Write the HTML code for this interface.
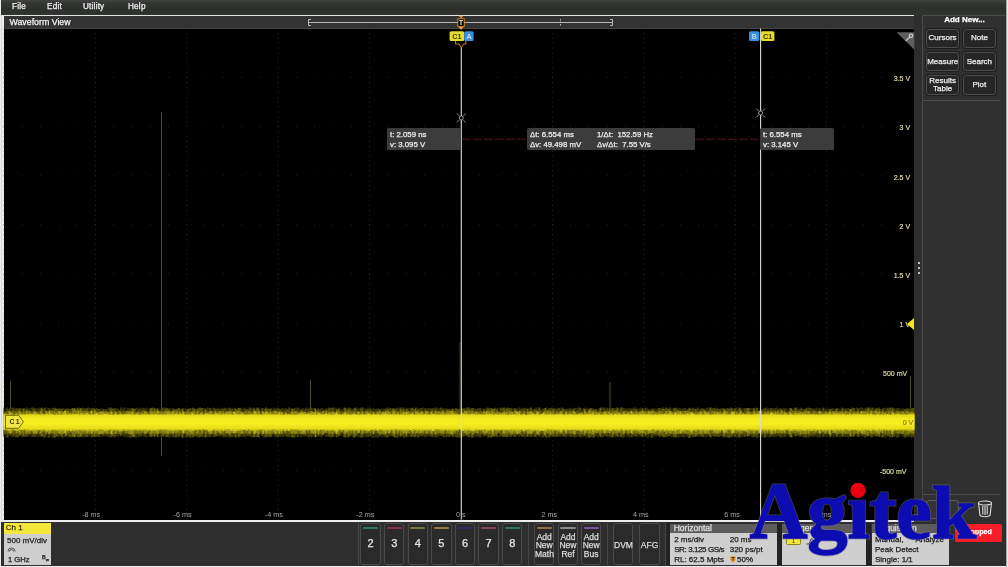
<!DOCTYPE html>
<html lang="en"><head><meta charset="utf-8"><title>Waveform View</title>
<style>
html,body{margin:0;padding:0;background:#000}
body{width:1008px;height:567px;position:relative;overflow:hidden;font-family:"Liberation Sans",sans-serif;color:#e6e6e6;font-size:8px;-webkit-text-stroke-width:.25px}
.a{position:absolute}
.t{position:absolute;white-space:nowrap;line-height:1}
#menubar{left:1px;top:0;width:1005px;height:15px;background:linear-gradient(#414340 0,#343633 22%,#2d2f2d 60%,#323432 100%)}
#menubar span{position:absolute;top:2px;font-size:8.2px;color:#f0f0f0;line-height:10px;letter-spacing:.2px}
#titlebar{left:3.5px;top:16px;width:910.7px;height:12.6px;background:#323332;border-bottom:1px solid #444;box-sizing:border-box}
#plot{left:3.5px;top:28.5px;width:910.7px;height:491.1px;background:#000}
.btn{position:absolute;box-sizing:border-box;border:1px solid #4a4a4a;border-radius:3px;background:#2a2a2a;color:#e8e8e8;text-align:center}
.rb{position:absolute;box-sizing:border-box;border:1px solid #4c4c4c;border-radius:3px;background:#262626;color:#eee;text-align:center;font-size:8px;line-height:8px;box-shadow:0 0 0 1px #1e1e1e}
.panel{position:absolute;top:524px;height:40.5px;background:#cfcfcf;color:#1a1a1a}
.panel .h{position:absolute;left:0;top:0;right:0;height:9px;background:#5c5c5c;color:#e0e0e0;font-size:8.5px;line-height:9px;padding-left:4px}
.panel .l{position:absolute;font-size:8px;line-height:10px;white-space:nowrap}
.ro{position:absolute;top:128.3px;height:21.6px;background:#3c3c3c;border-radius:1.5px;color:#ececec;font-size:7.8px}
.ro span{position:absolute;white-space:nowrap;line-height:9px}
#wrap{position:absolute;left:0;top:0;width:1008px;height:567px;will-change:transform}
</style></head><body><div id="wrap">

<div id="menubar" class="a"><span style="left:11px">File</span><span style="left:46px">Edit</span><span style="left:82px">Utility</span><span style="left:127px">Help</span></div>
<div class="a" style="left:0;top:0;width:1px;height:567px;background:#ececec"></div>
<div class="a" style="left:1px;top:15px;width:1px;height:506px;background:#d8d8d8"></div>
<div class="a" style="left:2px;top:15px;width:1.5px;height:506px;background:#ededed"></div>
<div class="a" style="left:2px;top:14.7px;width:912.4px;height:1.5px;background:#e4e4e4"></div>
<div id="titlebar" class="a"><span class="t" style="left:6px;top:2px;font-size:8.8px;color:#f2f2f2">Waveform View</span></div>
<div id="plot" class="a"></div>
<div class="a" style="left:0;top:519.8px;width:914.4px;height:2.3px;background:#ededed"></div>
<div class="a" style="left:1px;top:522px;width:1005px;height:43.5px;background:#2f2e2f"></div>
<div class="a" style="left:0;top:565.7px;width:1008px;height:1.3px;background:#f0f0f0"></div>
<div class="a" style="left:914.2px;top:14.5px;width:92.3px;height:507.5px;background:#2d2d2d"></div>
<div class="a" style="left:922px;top:14.5px;width:84px;height:507.5px;background:#303030;border-left:1px solid #4a4a4a;border-top:1px solid #4a4a4a;box-sizing:border-box"></div>
<div class="a" style="left:1006px;top:0;width:1px;height:567px;background:#a8a8a8"></div>
<div class="a" style="left:1007px;top:0;width:1px;height:567px;background:#e8e8e8"></div>
<div class="a" style="left:918px;top:261.5px;width:2px;height:2px;background:#cacaca;border-radius:.5px"></div>
<div class="a" style="left:918px;top:266.5px;width:2px;height:2px;background:#cacaca;border-radius:.5px"></div>
<div class="a" style="left:918px;top:271.5px;width:2px;height:2px;background:#cacaca;border-radius:.5px"></div>
<div class="t" style="left:923px;width:83px;top:14.6px;text-align:center;font-weight:bold;font-size:8px;color:#fff;line-height:9px">Add New...</div>
<div class="rb" style="left:926.2px;top:28.8px;width:32.8px;height:18.9px;padding-top:4.6px">Cursors</div>
<div class="rb" style="left:963px;top:28.8px;width:32.8px;height:18.9px;padding-top:4.6px">Note</div>
<div class="rb" style="left:926.2px;top:52px;width:32.8px;height:19.2px;padding-top:4.8px">Measure</div>
<div class="rb" style="left:963px;top:52px;width:32.8px;height:19.2px;padding-top:4.8px">Search</div>
<div class="rb" style="left:926.2px;top:75.2px;width:32.8px;height:19.5px;padding-top:1px">Results<br>Table</div>
<div class="rb" style="left:963px;top:75.2px;width:32.8px;height:19.5px;padding-top:5px">Plot</div>
<div class="a" style="left:923px;top:100px;width:77px;height:1px;background:#4e4e4e"></div>
<div class="a" style="left:923px;top:494px;width:77px;height:1px;background:#4e4e4e"></div>
<div class="a" style="left:926px;top:499.5px;width:33px;height:19px;border:1px solid #5c5c5c;border-radius:3px;box-sizing:border-box;background:#343434"></div>
<svg class="a" style="left:0;top:0" width="1008" height="567" viewBox="0 0 1008 567" font-family="Liberation Sans, sans-serif">
<clipPath id="pc"><rect x="3.5" y="28.5" width="910.7" height="491.1"/></clipPath><g clip-path="url(#pc)" stroke="#262626" stroke-width="1" fill="none"><path d="M4.0 28.0V520.6M95.4 28.0V520.6M186.8 28.0V520.6M278.2 28.0V520.6M369.6 28.0V520.6M461.0 28.0V520.6M552.4 28.0V520.6M643.8 28.0V520.6M735.2 28.0V520.6M826.6 28.0V520.6M918.0 28.0V520.6" stroke-dasharray="1 3.910"/><path d="M3.50 77.6H915.2M3.50 126.7H915.2M3.50 175.8H915.2M3.50 224.9H915.2M3.50 274.0H915.2M3.50 323.1H915.2M3.50 372.2H915.2M3.50 421.3H915.2M3.50 470.4H915.2" stroke-dasharray="1 17.280"/></g>
<g stroke="#504c22" stroke-width="1" fill="none">
<path d="M161.5 112V456"/>
<path d="M10.5 381V410M310.5 380V410M610 382V410M910.5 376V410"/>
</g>
<path d="M460 342V410" stroke="#3c3a14" stroke-width="1"/>
<path d="M5.0 408.4V437.1M6.0 408.3V437.7M11.0 408.9V437.3M15.0 407.5V437.4M30.0 408.2V437.5M47.0 407.4V437.5M64.0 407.9V437.3M102.0 407.8V437.7M119.0 408.6V437.0M120.0 409.1V436.7M122.0 409.0V437.0M126.0 407.8V437.2M129.0 407.9V437.8M148.0 407.4V437.3M159.0 407.6V437.2M172.0 407.9V436.6M184.0 408.3V437.0M212.0 407.9V436.1M217.0 407.5V436.5M219.0 408.1V436.1M237.0 408.0V437.0M256.0 408.3V437.1M260.0 407.5V436.1M273.0 407.8V436.4M300.0 407.6V437.1M310.0 408.4V436.6M317.0 409.1V437.1M324.0 408.4V436.4M325.0 408.9V437.6M335.0 408.7V436.4M342.0 408.0V436.4M359.0 407.5V437.5M374.0 408.8V437.8M380.0 408.9V436.5M383.0 408.0V436.5M410.0 407.9V437.3M424.0 408.8V436.5M482.0 408.7V437.3M486.0 408.9V436.2M499.0 408.2V437.5M518.0 408.7V436.2M520.0 407.7V436.1M532.0 407.6V436.3M534.0 408.1V436.7M538.0 408.6V437.6M542.0 408.8V436.5M582.0 409.2V436.2M595.0 407.9V437.2M597.0 408.8V436.5M625.0 408.9V436.9M633.0 408.7V437.1M640.0 408.3V437.0M644.0 409.0V436.1M650.0 408.5V436.8M686.0 408.0V436.2M699.0 408.8V436.7M744.0 409.0V436.8M759.0 408.6V437.2M786.0 407.5V437.5M788.0 408.0V436.7M793.0 408.9V436.7M794.0 407.8V437.6M821.0 409.2V436.4M825.0 409.1V436.6M828.0 408.8V436.3M835.0 408.4V436.7M839.0 408.6V437.5M841.0 408.2V437.5M856.0 407.7V436.6M881.0 408.5V437.6M896.0 408.0V437.4M900.0 408.4V437.2M901.0 408.2V436.0M902.0 407.7V436.6" stroke="#1c1a02" stroke-width="1.05" fill="none"/>
<path d="M4.0 407.7V436.6M9.0 408.5V436.1M12.0 407.6V437.2M21.0 408.2V436.4M22.0 408.3V437.7M29.0 408.1V436.6M31.0 407.5V436.4M32.0 407.8V437.1M37.0 407.7V437.4M38.0 408.3V436.7M39.0 407.4V437.0M46.0 407.7V437.2M48.0 408.1V437.8M50.0 408.0V437.1M51.0 408.9V436.0M53.0 408.0V437.3M58.0 408.1V437.5M60.0 407.8V436.3M68.0 407.8V436.7M76.0 407.7V436.2M83.0 407.8V436.7M84.0 408.2V437.6M89.0 407.4V436.4M90.0 408.3V436.5M101.0 407.6V437.0M104.0 408.7V436.6M105.0 409.0V436.1M106.0 409.1V437.1M108.0 408.2V436.9M114.0 407.9V437.7M117.0 407.7V436.1M124.0 407.6V436.9M125.0 407.6V437.5M127.0 408.8V437.3M137.0 407.5V436.5M138.0 407.7V437.6M140.0 407.8V437.3M142.0 409.1V436.0M144.0 408.0V437.8M146.0 408.3V437.8M147.0 407.6V437.1M149.0 408.5V436.8M160.0 408.9V436.8M165.0 407.5V437.3M170.0 407.9V436.5M171.0 408.4V437.8M175.0 409.0V437.4M180.0 408.3V436.1M181.0 408.9V436.9M185.0 407.7V437.2M186.0 408.9V437.8M189.0 408.1V437.1M192.0 408.9V437.3M203.0 408.4V437.1M204.0 407.7V437.4M207.0 407.7V437.6M209.0 408.4V436.2M213.0 408.3V436.7M215.0 408.1V437.0M221.0 407.6V437.5M227.0 408.5V436.5M228.0 407.5V436.9M233.0 409.1V436.5M234.0 407.4V436.9M241.0 407.8V436.4M242.0 409.1V436.9M243.0 407.8V437.0M246.0 407.5V437.7M249.0 407.7V436.1M252.0 407.4V437.3M261.0 408.7V436.2M264.0 407.9V437.8M272.0 408.1V436.4M274.0 407.5V437.7M277.0 407.6V436.9M281.0 408.9V437.3M283.0 407.8V437.4M284.0 409.0V436.8M285.0 408.1V436.0M290.0 407.7V436.0M296.0 408.5V436.6M297.0 407.4V437.2M299.0 408.8V436.8M302.0 408.7V437.1M303.0 408.0V436.1M304.0 408.4V437.2M307.0 407.4V436.2M313.0 408.3V436.1M314.0 408.3V436.4M319.0 408.8V437.4M321.0 407.8V437.1M323.0 408.7V436.2M327.0 408.2V436.8M341.0 408.8V436.1M343.0 409.0V437.3M347.0 407.7V436.1M352.0 409.2V436.7M357.0 408.6V436.0M364.0 408.5V436.7M365.0 408.5V436.9M366.0 409.1V437.4M367.0 407.6V436.7M369.0 407.4V436.6M372.0 409.0V437.7M376.0 408.5V436.9M378.0 407.9V437.7M382.0 407.6V437.4M385.0 408.4V437.0M389.0 408.7V436.1M391.0 407.8V436.2M396.0 408.5V437.7M398.0 409.1V437.2M399.0 407.5V437.7M405.0 407.6V437.7M408.0 407.6V436.4M409.0 408.0V437.0M417.0 407.4V437.4M420.0 408.3V437.2M422.0 407.8V436.5M427.0 409.0V437.8M428.0 407.9V436.2M430.0 408.2V436.8M434.0 408.2V436.4M437.0 408.7V436.3M438.0 407.7V437.4M439.0 408.3V437.5M440.0 407.7V436.0M442.0 408.1V436.0M444.0 408.5V437.6M445.0 408.1V437.7M448.0 408.5V437.1M451.0 408.7V436.2M454.0 408.5V437.6M466.0 408.6V437.1M471.0 407.8V436.5M474.0 408.8V436.3M476.0 409.1V437.2M479.0 408.9V437.2M481.0 408.2V437.5M483.0 407.9V436.9M490.0 407.7V437.4M498.0 407.7V436.9M513.0 408.9V437.1M516.0 408.0V437.3M526.0 407.5V436.4M529.0 407.9V437.0M530.0 408.2V436.6M537.0 407.7V437.8M540.0 407.4V436.5M541.0 408.7V437.5M548.0 408.7V437.5M555.0 407.5V436.0M561.0 407.4V437.3M565.0 408.9V436.3M567.0 408.4V436.4M568.0 408.8V436.1M569.0 408.5V436.6M572.0 408.9V436.4M573.0 408.4V436.2M576.0 408.7V437.1M578.0 407.5V436.0M586.0 407.5V437.4M587.0 407.6V437.7M599.0 408.8V436.1M602.0 407.6V436.9M603.0 407.8V437.5M605.0 407.5V436.1M606.0 409.1V436.2M608.0 409.1V436.3M611.0 407.8V437.7M614.0 407.9V436.3M616.0 409.0V437.6M619.0 407.9V437.4M623.0 409.2V437.8M626.0 408.2V436.2M627.0 408.4V437.6M628.0 408.8V436.5M629.0 407.5V437.6M631.0 408.5V436.5M638.0 408.9V437.1M639.0 408.1V436.7M647.0 407.7V437.6M648.0 408.9V437.7M649.0 408.7V437.4M653.0 408.3V436.9M654.0 407.6V437.1M655.0 408.5V436.3M656.0 408.4V436.5M657.0 408.9V436.1M671.0 408.6V437.3M673.0 408.3V437.0M678.0 407.6V437.3M680.0 408.4V436.3M682.0 408.7V437.0M684.0 407.8V437.4M687.0 408.4V436.9M688.0 409.2V437.3M692.0 407.8V436.1M705.0 408.8V436.3M707.0 407.7V436.8M709.0 408.9V436.3M722.0 408.0V436.0M726.0 407.9V436.9M733.0 408.3V436.8M734.0 408.6V436.8M736.0 407.7V436.4M737.0 407.6V437.5M742.0 409.0V436.8M746.0 407.5V436.1M750.0 408.1V436.5M751.0 408.0V436.2M753.0 408.0V437.5M755.0 408.4V437.1M758.0 407.9V437.4M760.0 408.7V437.6M761.0 408.9V437.6M763.0 408.0V436.5M767.0 409.0V436.7M769.0 409.0V437.6M773.0 407.7V436.3M774.0 408.6V437.6M776.0 407.5V437.2M777.0 407.6V436.5M778.0 408.1V436.2M780.0 407.9V437.7M783.0 408.9V437.2M787.0 407.9V437.1M789.0 408.9V436.8M798.0 407.6V436.1M803.0 408.8V437.7M808.0 407.6V436.5M812.0 408.4V437.2M814.0 408.6V436.7M816.0 407.9V437.2M817.0 407.5V437.3M818.0 408.7V437.0M819.0 408.0V437.0M822.0 408.7V436.0M827.0 407.8V437.6M829.0 407.7V436.7M832.0 407.7V436.3M833.0 408.1V436.8M838.0 407.9V436.8M844.0 408.6V436.9M847.0 407.9V437.0M849.0 408.0V437.0M855.0 408.0V436.2M860.0 407.7V436.2M862.0 407.6V436.8M863.0 408.3V436.8M864.0 408.4V437.6M874.0 407.9V436.5M884.0 408.2V436.3M886.0 408.8V437.5M891.0 408.3V436.2M898.0 408.0V437.0M903.0 407.9V436.9M904.0 408.4V436.8M910.0 408.8V436.5" stroke="#343106" stroke-width="1.05" fill="none"/>
<path d="M7.0 407.5V437.6M8.0 408.9V437.6M10.0 408.1V436.0M14.0 408.1V436.8M17.0 408.2V437.3M19.0 408.3V436.2M25.0 408.4V437.0M27.0 407.5V436.5M28.0 409.2V436.3M34.0 409.0V436.3M36.0 409.0V436.1M40.0 408.4V436.1M44.0 408.1V437.6M45.0 407.5V437.7M52.0 408.3V437.6M56.0 407.4V436.8M63.0 408.0V437.7M67.0 407.8V437.4M70.0 408.8V437.6M71.0 409.0V436.4M79.0 407.6V437.8M86.0 409.0V437.0M88.0 407.4V437.0M91.0 408.0V436.9M92.0 408.8V437.6M93.0 407.8V437.3M96.0 408.3V436.9M98.0 409.1V436.5M100.0 409.1V436.3M107.0 409.2V436.3M109.0 407.8V437.2M111.0 407.4V437.2M112.0 408.3V437.7M116.0 409.0V436.3M118.0 408.7V437.6M123.0 408.4V436.1M128.0 407.7V437.2M131.0 409.1V437.6M136.0 408.0V437.7M141.0 407.7V437.0M143.0 407.8V436.1M145.0 408.3V436.9M153.0 407.5V436.3M156.0 408.9V436.4M161.0 408.5V436.6M162.0 407.4V436.4M164.0 407.5V436.5M168.0 408.6V436.4M169.0 408.6V437.7M174.0 408.2V437.0M177.0 408.9V436.1M178.0 407.9V437.4M191.0 407.9V437.7M194.0 407.7V437.1M196.0 409.0V436.1M197.0 408.7V437.7M199.0 407.9V437.7M201.0 407.9V436.5M208.0 407.6V437.4M211.0 408.1V437.2M222.0 408.6V436.1M224.0 408.4V437.7M226.0 407.9V437.6M229.0 408.1V437.4M230.0 407.4V437.3M231.0 409.1V436.6M244.0 409.1V437.5M245.0 407.8V436.0M247.0 409.0V436.2M251.0 408.1V437.2M253.0 409.1V437.6M262.0 407.9V436.1M263.0 407.9V436.5M267.0 409.1V436.1M268.0 407.9V437.0M269.0 409.1V437.5M275.0 408.0V436.0M279.0 408.5V436.6M282.0 408.1V436.5M286.0 407.8V436.3M287.0 409.2V437.6M288.0 408.9V436.3M291.0 409.1V437.1M294.0 408.5V437.4M295.0 407.7V437.4M301.0 408.6V437.6M305.0 409.0V436.0M306.0 407.8V436.5M308.0 408.9V437.1M312.0 408.3V437.5M320.0 408.9V436.3M322.0 408.1V437.6M326.0 408.4V436.7M328.0 408.6V437.0M329.0 407.4V436.7M330.0 407.8V436.4M332.0 407.6V437.6M333.0 407.6V437.0M334.0 407.5V436.7M336.0 407.5V436.9M337.0 409.1V437.6M340.0 409.1V436.2M346.0 408.0V437.7M350.0 408.0V436.2M351.0 408.4V436.2M353.0 408.8V437.3M358.0 408.6V437.2M360.0 408.2V436.9M362.0 407.4V437.8M363.0 407.6V437.2M370.0 408.0V436.6M371.0 409.1V436.5M373.0 408.1V437.4M375.0 409.1V437.5M377.0 408.9V437.5M381.0 408.7V437.0M387.0 409.1V437.4M392.0 408.6V436.6M402.0 408.9V436.3M413.0 407.5V437.1M414.0 408.8V437.2M419.0 408.3V436.4M423.0 407.6V436.7M426.0 408.1V436.2M429.0 408.1V436.2M432.0 408.0V437.5M435.0 407.6V437.0M446.0 408.8V436.6M447.0 408.5V437.0M450.0 408.7V437.0M455.0 408.8V436.5M456.0 407.9V437.0M457.0 408.5V437.1M459.0 408.8V437.1M460.0 409.2V437.7M461.0 407.7V436.4M463.0 408.4V436.5M464.0 408.6V436.3M465.0 408.1V436.1M468.0 407.5V437.3M469.0 407.4V437.0M470.0 408.7V437.2M475.0 408.2V436.8M477.0 408.9V436.3M478.0 407.9V436.8M484.0 408.5V436.6M485.0 409.1V436.3M488.0 407.4V437.8M496.0 408.7V437.0M500.0 408.3V436.8M502.0 408.4V436.6M505.0 407.5V436.7M509.0 408.0V436.2M510.0 408.3V436.9M512.0 408.4V436.3M514.0 407.9V436.9M517.0 408.5V436.4M519.0 407.5V437.3M521.0 408.6V436.4M523.0 408.7V436.7M525.0 408.8V437.6M533.0 409.1V437.0M536.0 407.6V436.6M544.0 408.7V437.0M547.0 408.9V437.7M550.0 408.4V437.0M552.0 408.6V436.7M553.0 408.1V436.4M557.0 409.2V436.3M558.0 408.0V437.0M560.0 409.0V436.3M562.0 408.5V436.3M570.0 407.8V437.3M575.0 407.7V437.5M577.0 408.1V436.9M579.0 407.6V436.7M581.0 408.3V437.8M583.0 408.4V437.3M588.0 409.0V437.0M590.0 408.1V437.6M592.0 409.1V436.6M593.0 408.2V437.5M598.0 409.2V437.7M609.0 408.2V437.2M615.0 407.7V436.9M620.0 409.2V436.0M630.0 408.3V437.3M635.0 408.9V436.2M636.0 407.4V436.2M637.0 409.0V437.3M641.0 407.6V436.5M645.0 408.3V436.8M646.0 407.4V436.1M651.0 408.7V437.6M658.0 408.2V436.3M659.0 408.1V436.1M661.0 408.2V436.0M665.0 408.5V437.1M666.0 407.5V437.0M667.0 407.4V437.5M669.0 408.9V436.2M672.0 409.1V436.7M675.0 407.6V436.7M677.0 408.4V437.5M679.0 407.9V437.4M681.0 408.4V436.6M683.0 408.5V437.0M685.0 408.1V436.7M691.0 408.2V436.5M694.0 408.6V436.7M697.0 408.8V436.5M700.0 409.1V436.8M701.0 408.8V436.2M702.0 408.1V437.0M703.0 408.7V437.3M704.0 408.4V437.1M706.0 408.2V437.5M708.0 407.6V436.1M712.0 408.3V436.1M714.0 408.3V436.6M715.0 408.0V436.7M716.0 409.1V436.6M717.0 407.6V437.1M718.0 408.4V436.8M720.0 408.5V436.0M721.0 408.4V436.3M727.0 407.7V437.5M728.0 408.5V437.2M730.0 408.8V437.2M738.0 408.9V436.7M741.0 407.7V437.3M743.0 408.2V437.1M752.0 408.8V437.4M756.0 407.5V437.6M762.0 408.9V436.4M764.0 409.1V437.4M766.0 407.6V436.5M768.0 407.8V436.7M770.0 408.4V437.3M772.0 408.0V437.1M775.0 408.1V436.9M782.0 408.6V436.5M784.0 407.7V437.6M797.0 408.7V436.3M799.0 409.1V436.6M801.0 407.5V436.5M802.0 408.3V436.1M805.0 409.1V436.7M806.0 407.8V437.7M807.0 408.1V437.4M810.0 408.2V436.1M811.0 407.9V436.2M815.0 408.8V436.3M820.0 407.7V437.7M823.0 407.6V436.9M824.0 407.7V436.8M826.0 409.1V436.6M834.0 408.9V437.4M840.0 409.1V437.6M845.0 408.0V437.0M846.0 408.9V436.2M848.0 408.0V437.4M853.0 407.9V436.8M857.0 407.6V436.6M858.0 408.4V437.1M859.0 408.4V437.1M861.0 407.6V436.2M865.0 408.5V437.7M866.0 407.5V437.0M870.0 407.7V436.1M871.0 408.8V437.6M873.0 407.4V436.7M875.0 409.0V436.7M878.0 408.8V436.6M882.0 408.8V437.6M885.0 407.6V437.8M887.0 407.9V436.6M888.0 407.7V436.2M889.0 408.6V436.3M894.0 407.7V436.3M895.0 409.0V436.7M899.0 408.1V437.2M906.0 408.8V436.2M908.0 407.9V436.4M911.0 408.5V437.2M912.0 408.1V437.7M913.0 408.0V436.0M914.0 408.1V437.4" stroke="#4e4a08" stroke-width="1.05" fill="none"/>
<path d="M13.0 407.7V436.8M16.0 408.2V437.2M18.0 408.7V437.4M20.0 407.9V436.0M23.0 408.8V436.8M24.0 408.0V436.5M26.0 409.1V436.9M33.0 407.5V437.0M35.0 407.9V437.1M41.0 408.3V436.7M42.0 407.5V436.2M43.0 409.0V436.4M49.0 408.5V437.5M54.0 407.7V437.8M59.0 408.4V436.4M62.0 408.7V437.4M65.0 409.1V437.0M69.0 408.9V436.9M72.0 408.3V437.5M73.0 408.0V436.4M77.0 407.7V436.3M82.0 407.8V437.3M85.0 408.0V437.0M94.0 408.3V436.8M95.0 409.0V437.0M97.0 408.2V436.8M99.0 409.1V437.3M103.0 408.8V436.2M110.0 407.4V436.8M115.0 407.9V437.6M121.0 407.6V436.3M130.0 408.4V437.5M132.0 408.2V436.9M133.0 408.1V436.9M134.0 409.2V437.2M135.0 408.7V436.7M139.0 409.0V436.6M150.0 408.6V436.5M151.0 408.1V437.2M154.0 408.5V436.5M155.0 407.7V436.9M157.0 408.5V436.2M158.0 408.6V437.4M163.0 408.3V436.8M166.0 407.8V436.5M173.0 408.6V437.3M182.0 408.7V437.4M183.0 408.3V437.8M187.0 408.9V437.6M198.0 408.2V436.4M205.0 408.3V437.4M206.0 409.2V437.0M210.0 408.1V437.1M214.0 407.8V437.3M218.0 408.3V436.7M220.0 408.9V436.0M223.0 408.6V436.4M225.0 407.8V436.1M232.0 408.3V437.4M235.0 408.2V437.3M236.0 409.1V437.4M238.0 407.8V436.4M239.0 408.3V437.4M248.0 409.2V436.1M250.0 407.5V436.6M255.0 408.9V437.0M258.0 407.5V437.1M259.0 408.8V437.7M265.0 409.0V436.7M270.0 408.7V436.3M271.0 408.5V437.2M276.0 409.2V437.3M278.0 408.2V437.4M280.0 408.9V436.6M289.0 407.5V437.3M292.0 408.2V437.3M293.0 409.1V437.6M298.0 407.7V437.2M309.0 408.2V437.5M311.0 407.6V436.7M318.0 408.5V436.3M331.0 408.2V437.5M338.0 409.2V436.5M339.0 407.7V436.0M344.0 407.7V436.9M348.0 409.0V437.5M349.0 407.6V436.8M355.0 408.2V437.5M356.0 407.5V436.3M361.0 407.6V437.4M368.0 408.8V437.1M379.0 408.8V436.5M384.0 408.9V436.5M386.0 408.3V437.3M388.0 407.4V437.3M390.0 408.0V436.2M394.0 408.9V437.0M395.0 408.4V437.2M397.0 407.7V437.8M400.0 408.5V436.5M401.0 407.5V436.7M403.0 407.5V436.2M404.0 409.1V437.6M406.0 408.9V436.7M407.0 408.5V437.3M411.0 408.1V437.2M415.0 408.4V437.4M416.0 407.6V436.3M418.0 409.2V437.8M421.0 407.9V436.1M425.0 408.5V437.2M431.0 408.8V436.6M433.0 408.6V436.5M436.0 407.8V437.5M441.0 407.6V436.1M443.0 408.7V437.0M449.0 409.0V437.0M452.0 408.7V436.3M453.0 408.6V437.0M458.0 409.1V437.5M467.0 407.6V436.0M473.0 408.1V437.4M480.0 407.9V437.1M487.0 407.7V436.3M491.0 408.0V437.5M492.0 408.8V437.5M493.0 408.5V436.4M494.0 409.0V436.4M495.0 407.8V436.6M497.0 408.4V437.3M501.0 407.4V436.3M503.0 408.1V437.0M506.0 409.1V437.2M508.0 407.5V436.5M511.0 407.8V437.0M522.0 408.5V436.7M524.0 407.8V436.6M527.0 408.6V437.1M528.0 408.8V436.8M543.0 408.7V437.6M546.0 407.4V437.8M549.0 408.3V437.7M551.0 407.7V436.4M556.0 408.9V437.2M559.0 408.1V436.6M563.0 407.5V436.3M564.0 409.0V436.8M566.0 409.0V437.2M571.0 408.8V437.0M574.0 408.3V436.9M580.0 407.7V436.7M584.0 408.2V436.1M585.0 408.9V436.1M596.0 409.0V436.3M600.0 407.9V436.7M601.0 407.6V437.2M604.0 407.4V436.5M607.0 407.7V437.0M610.0 408.3V436.7M612.0 408.4V437.5M613.0 407.9V437.1M618.0 407.8V436.9M622.0 407.5V436.5M624.0 408.0V437.5M632.0 408.4V437.4M634.0 407.5V436.3M642.0 409.0V437.2M643.0 408.1V436.4M652.0 408.7V437.7M660.0 408.0V437.4M662.0 409.0V436.3M663.0 407.5V436.9M670.0 407.5V436.6M689.0 407.7V437.7M690.0 408.2V437.7M693.0 407.7V437.2M695.0 408.9V436.9M696.0 408.7V436.4M698.0 407.6V436.2M711.0 407.4V437.7M713.0 408.4V436.0M719.0 409.1V436.9M723.0 408.3V437.6M724.0 408.6V436.3M731.0 407.4V437.3M732.0 408.5V436.6M739.0 407.5V437.8M740.0 408.0V436.5M747.0 408.0V436.2M748.0 407.9V436.7M757.0 408.0V437.4M771.0 408.1V436.6M779.0 409.0V436.2M781.0 408.6V437.2M785.0 408.7V436.5M790.0 407.9V437.0M791.0 408.0V437.8M792.0 408.8V437.3M795.0 407.8V436.2M796.0 407.6V436.5M800.0 408.9V436.7M804.0 408.9V437.3M809.0 407.8V437.4M813.0 408.4V436.4M830.0 409.1V437.5M831.0 408.9V436.5M836.0 408.7V436.2M842.0 407.4V436.3M843.0 408.8V437.0M852.0 407.5V436.6M867.0 408.4V436.5M868.0 407.6V436.0M869.0 407.6V436.3M872.0 407.5V437.4M876.0 408.4V436.1M877.0 407.7V436.5M879.0 407.6V437.1M880.0 409.1V436.5M892.0 407.5V437.5M893.0 408.6V437.1M897.0 408.5V437.7M907.0 408.5V436.7M909.0 409.1V436.6" stroke="#6a640c" stroke-width="1.05" fill="none"/>
<path d="M55.0 408.4V437.5M57.0 409.0V436.5M61.0 408.9V436.3M66.0 409.2V436.1M74.0 408.1V437.1M75.0 408.7V437.5M78.0 408.6V437.2M80.0 408.6V436.9M81.0 408.2V436.2M87.0 408.3V436.8M113.0 408.8V436.1M152.0 407.7V436.5M167.0 408.3V437.1M176.0 409.1V437.8M179.0 407.8V436.8M188.0 408.7V436.2M190.0 408.5V437.2M193.0 407.8V437.3M195.0 409.0V436.3M200.0 407.6V437.0M202.0 407.9V436.6M216.0 408.9V436.2M240.0 408.0V436.3M254.0 407.8V437.2M257.0 407.7V437.1M266.0 407.4V437.4M315.0 407.8V437.6M316.0 409.2V436.9M345.0 407.8V437.3M354.0 408.4V437.2M393.0 408.2V436.3M412.0 408.3V436.3M462.0 408.3V437.6M472.0 408.3V437.4M489.0 408.6V437.3M504.0 407.5V436.7M507.0 408.3V436.9M515.0 408.6V436.4M531.0 407.5V436.8M535.0 409.2V436.9M539.0 407.6V436.2M545.0 407.9V436.1M554.0 408.8V436.8M589.0 409.0V437.7M591.0 407.9V436.8M594.0 409.2V437.4M617.0 407.5V436.2M621.0 407.6V437.3M664.0 409.1V437.4M668.0 408.8V436.1M674.0 407.9V437.3M676.0 408.3V437.3M710.0 407.8V437.0M725.0 409.0V437.0M729.0 408.5V437.7M735.0 408.4V437.1M745.0 408.2V436.7M749.0 408.3V436.1M754.0 407.9V436.8M765.0 408.3V437.4M837.0 408.3V436.9M850.0 409.0V436.2M851.0 409.1V436.7M854.0 408.3V436.6M883.0 408.6V437.3M890.0 407.4V437.2M905.0 409.2V437.7" stroke="#857e12" stroke-width="1.05" fill="none"/>
<path d="M5.0 412.0V433.8M7.0 410.5V434.1M13.0 411.3V433.0M15.0 410.9V433.3M18.0 411.7V432.9M21.0 411.4V433.0M25.0 411.1V434.5M28.0 412.1V433.6M31.0 410.7V433.2M32.0 411.9V433.8M39.0 410.4V433.7M42.0 410.5V434.4M43.0 411.3V433.6M44.0 412.1V433.9M45.0 410.7V433.3M51.0 411.6V433.9M67.0 412.2V434.6M69.0 410.7V433.4M70.0 411.0V432.9M72.0 410.8V433.2M75.0 412.2V434.0M77.0 411.2V434.3M94.0 411.9V433.2M109.0 411.9V433.8M113.0 410.9V434.4M118.0 411.6V433.9M122.0 411.7V434.1M124.0 411.5V433.1M135.0 411.5V433.8M140.0 411.6V433.6M143.0 410.6V433.2M148.0 411.0V433.7M149.0 412.2V434.1M166.0 412.1V433.6M178.0 411.8V432.8M181.0 411.2V433.3M196.0 411.4V433.2M199.0 411.4V434.0M201.0 412.1V434.0M203.0 410.6V433.0M204.0 411.3V433.6M205.0 411.2V434.3M207.0 411.1V434.2M208.0 410.8V433.0M213.0 411.1V433.7M218.0 411.5V433.4M222.0 410.8V433.3M224.0 410.8V434.2M232.0 411.9V432.9M244.0 411.6V433.1M247.0 410.6V433.1M251.0 410.9V433.3M253.0 411.6V434.5M260.0 410.7V432.9M265.0 411.5V433.8M283.0 411.3V433.0M284.0 411.7V434.3M287.0 411.0V432.9M288.0 411.0V433.8M289.0 410.9V433.9M298.0 411.9V433.6M307.0 412.0V433.6M309.0 411.0V434.5M317.0 411.7V433.3M325.0 411.2V433.6M327.0 410.8V433.5M331.0 411.8V434.5M338.0 411.2V433.4M340.0 411.1V434.1M341.0 411.7V433.7M343.0 410.9V433.6M347.0 412.0V433.3M349.0 411.5V432.8M353.0 411.8V433.8M356.0 411.4V433.7M361.0 410.4V434.2M364.0 412.0V433.6M365.0 411.0V433.5M369.0 410.8V433.8M372.0 411.2V433.9M375.0 412.0V433.5M376.0 410.8V432.8M379.0 410.6V432.8M384.0 411.8V434.4M387.0 411.8V433.0M391.0 410.5V433.6M396.0 412.2V433.6M400.0 411.5V432.8M402.0 411.6V433.5M411.0 411.2V432.8M415.0 410.8V433.0M425.0 410.9V433.3M429.0 411.6V434.2M433.0 410.4V433.9M434.0 410.6V433.7M440.0 411.9V434.2M445.0 410.6V432.8M456.0 411.6V433.1M458.0 411.2V433.3M459.0 410.6V433.7M460.0 410.8V433.8M461.0 410.5V433.9M463.0 410.8V433.3M480.0 410.8V434.5M491.0 411.9V434.6M495.0 410.6V433.7M501.0 412.0V434.4M502.0 410.9V434.1M508.0 410.5V433.0M522.0 411.1V433.8M523.0 411.4V432.9M526.0 411.6V434.3M533.0 411.4V433.3M535.0 411.7V434.6M541.0 410.6V434.3M542.0 411.5V433.3M546.0 411.6V433.9M549.0 411.7V433.2M552.0 411.4V434.4M555.0 411.7V434.2M559.0 410.8V433.2M563.0 410.5V433.7M564.0 412.1V433.0M568.0 410.5V433.9M577.0 411.8V433.2M579.0 412.1V434.5M581.0 410.5V434.3M583.0 411.8V433.8M611.0 412.0V433.6M622.0 411.5V433.1M627.0 411.5V433.8M635.0 411.4V433.7M638.0 412.0V433.6M647.0 411.0V433.3M658.0 410.7V433.9M664.0 411.5V434.3M665.0 410.5V433.3M677.0 410.6V433.0M687.0 410.7V434.5M689.0 410.9V433.3M694.0 412.0V433.2M696.0 410.6V434.6M698.0 410.7V433.5M703.0 410.7V434.0M710.0 411.1V433.4M711.0 411.8V433.2M722.0 412.1V433.2M723.0 411.8V433.6M726.0 410.9V434.4M729.0 411.3V433.3M736.0 411.6V434.5M738.0 411.5V433.9M744.0 411.9V434.4M745.0 411.3V434.0M746.0 412.1V433.7M751.0 412.0V433.1M756.0 411.2V433.7M763.0 410.9V433.5M769.0 410.4V433.6M777.0 410.8V434.3M786.0 411.7V433.6M788.0 410.7V434.3M792.0 411.2V434.2M799.0 411.0V434.4M802.0 410.9V434.0M804.0 410.5V434.4M810.0 412.0V434.6M812.0 411.6V432.8M817.0 411.3V433.7M818.0 411.6V433.7M823.0 411.7V433.2M824.0 411.0V434.5M828.0 410.6V433.3M832.0 411.0V433.0M852.0 412.1V433.7M860.0 410.9V432.9M869.0 411.6V433.5M881.0 411.1V434.2M884.0 410.9V433.2M887.0 410.6V433.9M890.0 411.3V433.7M894.0 412.1V433.9M895.0 411.6V433.6M905.0 411.6V433.4" stroke="#5a550a" stroke-width="1.05" fill="none"/>
<path d="M4.0 411.0V434.4M6.0 411.4V434.1M8.0 411.7V433.6M14.0 410.9V434.6M16.0 411.1V434.2M23.0 411.7V433.4M24.0 411.6V434.0M38.0 411.3V432.9M48.0 411.5V434.0M53.0 412.1V432.9M55.0 411.2V434.2M56.0 411.8V433.4M57.0 412.2V434.2M61.0 412.0V434.3M74.0 411.2V434.4M80.0 412.1V434.0M81.0 412.1V433.0M83.0 410.5V434.5M85.0 410.4V433.4M89.0 412.2V433.9M90.0 411.1V434.3M93.0 410.8V434.2M96.0 411.6V433.6M97.0 412.1V434.6M105.0 411.7V433.7M106.0 410.8V434.3M114.0 411.8V433.7M115.0 410.6V433.9M117.0 411.8V433.2M120.0 411.1V434.6M121.0 411.4V434.5M123.0 410.8V433.1M125.0 411.2V433.2M127.0 411.1V433.3M128.0 411.1V433.4M134.0 412.0V433.2M136.0 411.9V433.9M137.0 412.0V433.8M138.0 411.3V433.1M142.0 410.5V433.1M150.0 411.0V434.1M152.0 410.5V434.1M154.0 410.8V434.5M156.0 411.5V433.9M160.0 410.9V433.2M161.0 411.7V433.2M163.0 412.0V434.5M164.0 411.6V434.5M170.0 410.6V434.4M175.0 410.8V433.6M176.0 411.4V434.3M179.0 410.5V433.9M182.0 411.6V434.4M185.0 411.0V433.2M186.0 412.1V434.4M187.0 412.0V433.5M189.0 412.0V433.1M190.0 412.1V434.5M193.0 411.2V434.2M195.0 410.5V433.6M200.0 411.6V434.3M214.0 412.0V434.4M217.0 411.5V432.8M220.0 412.1V434.6M225.0 412.2V432.8M236.0 412.1V433.6M239.0 410.8V433.8M240.0 411.3V433.0M245.0 411.5V433.1M248.0 411.5V433.8M249.0 410.8V434.0M252.0 411.6V433.1M257.0 411.3V432.9M261.0 411.9V434.1M262.0 410.6V433.6M269.0 412.2V434.5M271.0 411.8V433.0M273.0 410.6V432.9M278.0 412.2V433.4M281.0 410.7V433.6M285.0 410.5V434.1M286.0 412.1V432.9M290.0 412.1V434.1M291.0 412.0V433.8M293.0 410.7V433.2M294.0 411.4V433.4M299.0 412.1V434.1M300.0 410.5V433.6M306.0 411.9V434.0M310.0 411.3V433.1M320.0 410.8V434.4M322.0 411.7V434.5M328.0 411.0V433.6M329.0 411.8V434.2M334.0 411.3V433.5M335.0 412.0V432.8M342.0 410.8V433.3M350.0 410.5V434.3M351.0 412.0V433.2M352.0 410.6V434.4M355.0 411.9V434.4M357.0 410.9V434.6M360.0 411.9V433.1M367.0 410.8V433.0M368.0 410.6V433.5M371.0 410.5V433.3M377.0 411.1V433.2M381.0 412.1V434.2M392.0 411.1V434.6M397.0 410.6V433.3M399.0 410.9V433.2M409.0 411.7V434.1M410.0 411.0V434.0M414.0 410.8V433.9M419.0 411.5V433.9M424.0 410.9V433.0M430.0 412.1V433.4M437.0 411.1V433.4M438.0 411.7V434.4M442.0 410.4V434.3M446.0 411.6V433.6M447.0 410.5V434.6M449.0 411.7V434.4M454.0 411.1V433.9M457.0 410.5V433.8M462.0 412.1V433.6M468.0 412.1V433.8M470.0 410.8V433.4M471.0 410.6V432.8M472.0 410.7V434.6M474.0 411.7V433.6M475.0 411.3V433.5M478.0 412.0V434.3M479.0 411.5V433.0M481.0 410.7V434.3M483.0 411.6V434.6M488.0 410.8V432.9M489.0 411.1V434.0M494.0 410.6V432.9M497.0 410.7V433.5M498.0 411.1V433.0M500.0 412.1V433.9M506.0 411.6V433.5M510.0 410.8V433.9M514.0 411.6V433.3M521.0 410.9V434.5M525.0 410.7V433.7M527.0 412.1V433.2M534.0 410.5V434.6M536.0 410.9V433.3M539.0 411.3V434.0M540.0 411.3V434.1M543.0 411.8V433.3M544.0 411.3V434.3M554.0 411.4V433.3M556.0 411.6V433.4M558.0 411.6V434.1M565.0 410.8V434.4M569.0 410.9V433.4M570.0 411.0V433.7M572.0 412.1V432.9M576.0 411.5V434.1M578.0 410.6V433.9M580.0 411.8V434.4M584.0 410.6V434.2M587.0 412.1V433.5M588.0 411.2V433.3M591.0 410.8V434.1M592.0 412.2V434.3M595.0 411.9V433.0M598.0 411.9V433.1M599.0 411.1V433.9M600.0 411.1V434.4M601.0 412.0V433.9M603.0 412.1V433.2M606.0 411.9V434.4M608.0 411.9V433.1M612.0 411.0V433.2M614.0 410.8V434.4M615.0 410.4V433.2M616.0 410.5V434.5M618.0 411.8V432.9M619.0 411.5V433.0M620.0 412.0V433.3M621.0 412.0V433.6M625.0 411.1V432.9M630.0 410.8V433.3M634.0 411.0V433.3M645.0 410.9V433.8M654.0 410.6V434.5M656.0 411.5V432.8M657.0 411.8V434.2M660.0 410.6V434.3M661.0 411.3V434.3M662.0 411.2V432.8M663.0 412.1V433.8M667.0 411.0V433.4M668.0 410.7V433.0M672.0 411.4V433.4M674.0 411.9V433.2M679.0 411.3V433.9M682.0 411.1V433.5M684.0 411.1V433.0M701.0 410.8V432.8M708.0 412.1V433.1M713.0 411.6V433.6M716.0 411.1V434.1M719.0 411.8V434.1M721.0 410.9V432.9M728.0 411.7V433.4M730.0 411.6V434.1M731.0 412.1V432.9M735.0 410.6V433.3M739.0 411.9V434.5M740.0 410.6V433.1M742.0 411.7V433.3M743.0 412.1V434.3M748.0 412.0V433.5M753.0 411.9V432.9M757.0 411.1V433.6M762.0 410.5V434.2M765.0 412.1V433.5M767.0 411.5V434.1M770.0 411.3V434.4M774.0 412.1V434.0M779.0 412.0V433.7M780.0 412.1V433.9M783.0 410.7V433.9M787.0 412.0V434.1M791.0 411.4V434.6M794.0 410.6V433.7M795.0 411.0V433.2M796.0 411.6V433.1M797.0 411.3V432.9M807.0 410.6V433.3M811.0 411.1V434.2M813.0 410.9V433.4M814.0 411.1V433.4M815.0 410.7V434.5M821.0 410.6V433.4M827.0 412.2V433.8M831.0 411.6V434.6M837.0 411.0V433.9M839.0 411.3V433.7M840.0 411.6V434.3M843.0 412.1V433.7M844.0 410.9V433.9M847.0 411.0V434.0M849.0 411.8V433.4M851.0 410.5V434.0M854.0 411.0V434.4M856.0 410.9V433.7M859.0 412.2V434.3M866.0 411.1V434.6M867.0 411.8V434.0M870.0 410.8V433.1M873.0 411.6V433.5M875.0 411.1V433.9M877.0 411.9V434.2M885.0 412.2V434.4M886.0 410.8V434.6M888.0 411.3V434.1M891.0 412.0V434.2M896.0 411.0V433.1M897.0 411.2V432.9M898.0 411.1V434.3M900.0 410.8V433.2M901.0 411.9V433.9M904.0 411.3V434.2M906.0 411.6V434.4M908.0 411.4V434.4M909.0 411.5V434.4M910.0 411.6V433.6M912.0 411.2V433.1M914.0 412.1V433.1" stroke="#7c7510" stroke-width="1.05" fill="none"/>
<path d="M10.0 410.5V434.3M11.0 412.2V434.0M12.0 411.2V433.0M17.0 412.0V433.4M19.0 410.5V433.1M22.0 412.1V434.2M26.0 411.0V433.7M27.0 410.9V433.8M30.0 411.0V434.4M33.0 411.5V433.6M34.0 411.5V434.0M35.0 410.9V433.3M36.0 411.8V434.0M37.0 412.2V433.8M40.0 411.8V433.9M47.0 410.8V432.8M54.0 410.8V434.1M58.0 410.7V433.0M62.0 411.5V433.8M63.0 412.0V434.2M71.0 412.0V432.8M73.0 410.5V433.7M78.0 410.7V433.3M79.0 410.6V434.0M82.0 410.9V434.3M84.0 411.1V433.6M86.0 411.4V433.6M87.0 412.2V433.0M88.0 411.1V434.0M98.0 411.9V433.7M99.0 412.2V434.2M100.0 411.7V433.9M101.0 411.1V433.7M102.0 411.6V434.0M103.0 411.4V434.2M104.0 410.9V433.0M108.0 411.9V434.2M110.0 411.9V433.0M119.0 410.8V433.9M126.0 411.1V434.5M130.0 412.1V434.3M132.0 411.0V434.5M133.0 411.1V433.7M139.0 411.7V433.9M141.0 411.8V434.4M144.0 410.5V433.4M145.0 411.3V434.5M146.0 411.2V433.5M155.0 411.1V433.8M158.0 410.5V434.0M159.0 411.1V433.6M162.0 411.2V432.9M168.0 410.9V434.2M171.0 412.1V433.9M172.0 410.9V433.0M173.0 410.7V434.5M174.0 410.5V433.1M180.0 410.8V433.6M188.0 410.6V434.3M191.0 412.1V434.0M194.0 410.7V433.2M197.0 411.2V434.5M198.0 410.6V433.4M206.0 411.3V433.9M209.0 412.0V434.6M211.0 411.6V434.2M212.0 410.7V434.1M215.0 410.8V433.5M216.0 411.7V434.5M223.0 410.7V434.0M226.0 411.3V433.7M227.0 412.0V433.2M228.0 410.8V433.5M230.0 411.0V434.3M238.0 410.9V433.1M241.0 411.7V433.9M242.0 411.8V433.4M246.0 410.4V433.7M258.0 412.2V434.3M267.0 411.1V433.7M268.0 412.0V433.7M272.0 411.7V434.5M275.0 410.5V433.9M276.0 411.6V434.1M277.0 410.9V433.6M295.0 410.9V433.9M297.0 410.9V433.2M301.0 411.6V433.9M303.0 412.1V433.5M304.0 411.8V433.9M308.0 411.6V433.0M311.0 411.4V433.9M312.0 410.9V433.1M313.0 411.9V434.3M314.0 411.8V433.7M318.0 410.9V434.5M319.0 411.9V434.1M321.0 412.2V433.2M324.0 410.6V434.1M332.0 411.2V434.5M333.0 411.7V433.5M339.0 411.2V434.0M344.0 412.2V433.3M346.0 410.5V434.2M348.0 410.9V434.0M362.0 411.1V434.6M370.0 411.5V433.3M373.0 411.7V434.2M374.0 411.6V433.8M382.0 412.1V433.5M389.0 411.9V433.7M390.0 411.5V433.2M393.0 410.4V433.1M395.0 410.8V433.8M401.0 410.4V434.5M403.0 411.2V433.9M404.0 411.6V433.0M405.0 411.8V433.0M407.0 411.9V433.8M412.0 412.1V433.2M417.0 412.0V433.2M418.0 410.6V433.1M420.0 412.1V434.3M421.0 411.6V433.6M423.0 412.1V434.4M427.0 411.6V433.3M428.0 410.8V434.1M431.0 411.6V433.5M432.0 410.9V434.5M436.0 410.7V434.4M444.0 411.6V434.3M450.0 410.9V433.9M451.0 410.6V434.2M452.0 410.9V433.9M453.0 410.8V434.3M455.0 411.2V433.0M464.0 412.0V432.9M466.0 410.8V434.3M469.0 410.5V433.8M473.0 411.3V434.6M476.0 410.7V433.2M482.0 411.4V432.9M485.0 412.1V433.7M490.0 410.4V433.9M492.0 410.9V433.8M493.0 411.7V434.4M496.0 412.0V434.5M499.0 411.9V432.9M504.0 411.9V433.1M505.0 411.3V434.4M509.0 410.7V433.4M511.0 411.6V434.5M512.0 411.5V433.8M513.0 411.8V434.6M515.0 410.7V432.9M516.0 410.8V433.8M519.0 411.0V433.4M520.0 410.6V434.2M524.0 411.0V433.3M529.0 412.1V434.2M530.0 410.9V434.1M547.0 410.8V433.2M550.0 410.8V434.4M551.0 411.4V434.4M553.0 410.8V434.1M557.0 412.0V434.2M561.0 411.0V434.0M562.0 410.5V433.5M566.0 411.3V433.9M567.0 411.4V433.2M571.0 411.8V433.9M573.0 410.6V433.8M574.0 410.9V434.5M582.0 411.9V434.3M586.0 412.0V433.0M589.0 410.6V434.3M594.0 411.0V434.3M596.0 410.4V433.2M597.0 412.0V432.9M602.0 412.0V433.2M607.0 411.0V433.1M610.0 411.6V433.4M613.0 412.0V434.2M617.0 410.8V433.8M623.0 411.3V433.9M626.0 410.6V433.0M628.0 411.2V434.4M629.0 411.9V433.2M633.0 412.1V434.2M636.0 410.7V432.9M639.0 412.0V433.9M641.0 412.0V433.0M643.0 410.7V433.5M646.0 411.2V434.4M648.0 410.8V434.1M649.0 410.7V433.5M651.0 411.7V433.3M652.0 410.9V433.1M655.0 411.6V434.3M659.0 410.9V434.3M669.0 410.4V433.1M670.0 411.0V433.5M673.0 412.1V434.3M675.0 411.6V434.0M683.0 410.9V433.9M685.0 410.9V434.0M690.0 412.0V432.9M691.0 412.1V434.4M693.0 411.9V433.9M695.0 412.2V434.5M697.0 411.5V434.4M699.0 412.1V434.0M704.0 410.5V433.6M705.0 410.5V433.8M706.0 411.4V433.8M712.0 410.4V433.2M714.0 411.1V432.9M720.0 410.7V433.1M747.0 410.9V433.0M750.0 411.9V433.8M752.0 411.7V434.2M755.0 411.1V434.3M758.0 411.5V434.3M764.0 412.1V433.4M766.0 412.0V433.4M773.0 410.4V434.5M775.0 410.4V433.9M781.0 410.5V433.1M784.0 412.1V432.8M789.0 411.8V434.3M790.0 411.4V433.6M793.0 410.8V433.1M798.0 410.7V434.5M800.0 411.2V434.0M801.0 412.1V434.2M806.0 410.5V433.7M808.0 411.3V434.3M809.0 411.2V433.4M816.0 412.2V432.9M822.0 411.4V432.8M825.0 411.7V434.0M826.0 411.1V433.3M834.0 412.0V433.5M836.0 410.8V433.7M838.0 411.5V434.2M841.0 410.9V433.2M842.0 411.8V433.7M845.0 411.9V433.7M846.0 410.8V433.8M848.0 411.7V434.2M850.0 411.5V433.4M853.0 412.1V433.2M855.0 411.7V433.7M857.0 412.0V433.1M863.0 411.1V434.4M865.0 410.9V434.6M868.0 411.5V434.3M872.0 411.0V434.5M874.0 410.6V434.2M878.0 411.1V434.5M879.0 411.9V434.1M880.0 411.3V432.8M882.0 411.8V433.1M883.0 411.1V433.2M889.0 411.3V432.8M893.0 411.4V434.1M899.0 411.6V433.8M902.0 410.5V434.2M907.0 410.7V433.7M911.0 411.8V433.6M913.0 411.8V433.9" stroke="#9c9414" stroke-width="1.05" fill="none"/>
<path d="M9.0 411.0V432.9M20.0 411.0V434.4M29.0 410.5V433.5M41.0 410.8V433.2M46.0 410.7V434.5M49.0 411.2V434.0M50.0 410.6V433.3M52.0 410.5V433.6M59.0 410.9V433.2M60.0 410.9V434.0M64.0 411.0V433.2M65.0 410.7V433.0M66.0 410.9V434.6M68.0 410.7V433.3M76.0 410.6V433.7M91.0 410.4V433.5M92.0 410.9V433.5M95.0 410.5V433.4M107.0 411.4V433.7M111.0 410.5V433.9M112.0 411.9V434.4M116.0 411.7V433.8M129.0 411.0V433.9M131.0 411.7V433.9M147.0 411.9V433.0M151.0 411.4V433.7M153.0 411.8V433.1M157.0 410.8V432.9M165.0 410.5V433.5M167.0 411.3V433.4M169.0 410.7V432.9M177.0 411.0V433.1M183.0 410.6V432.9M184.0 412.1V433.7M192.0 411.6V434.5M202.0 412.0V433.7M210.0 411.3V433.2M219.0 411.0V433.1M221.0 411.1V433.9M229.0 411.8V434.4M231.0 411.6V433.3M233.0 411.7V433.1M234.0 411.5V433.8M235.0 411.8V433.0M237.0 410.6V432.9M243.0 411.9V433.9M250.0 411.5V434.1M254.0 410.7V434.1M255.0 411.1V434.2M256.0 411.5V433.0M259.0 410.7V433.7M263.0 411.3V433.9M264.0 412.0V433.4M266.0 411.1V433.4M270.0 411.6V433.6M274.0 410.7V433.5M279.0 411.6V433.9M280.0 411.7V433.4M282.0 411.8V434.0M292.0 411.5V433.2M296.0 411.4V434.1M302.0 410.6V434.0M305.0 411.7V434.0M315.0 412.0V433.3M316.0 411.6V433.0M323.0 411.0V434.6M326.0 410.5V433.1M330.0 411.9V433.6M336.0 412.1V434.0M337.0 410.5V433.7M345.0 412.1V433.3M354.0 412.0V433.2M358.0 411.7V432.9M359.0 411.2V433.3M363.0 411.8V433.8M366.0 411.3V433.4M378.0 411.5V433.3M380.0 410.5V434.5M383.0 410.9V434.3M385.0 411.7V434.3M386.0 410.7V433.7M388.0 410.4V433.1M394.0 411.2V434.4M398.0 411.9V434.4M406.0 411.7V434.5M408.0 410.7V432.9M413.0 412.2V433.2M416.0 411.0V433.2M422.0 411.1V433.0M426.0 410.7V433.8M435.0 411.6V434.1M439.0 411.0V433.1M441.0 411.8V433.4M443.0 410.7V433.4M448.0 410.6V432.9M465.0 410.6V432.9M467.0 410.8V434.5M477.0 411.7V433.1M484.0 410.8V433.7M486.0 411.5V434.2M487.0 410.8V432.8M503.0 412.0V433.8M507.0 412.0V432.9M517.0 410.8V433.9M518.0 412.0V434.2M528.0 411.6V433.5M531.0 411.5V433.1M532.0 411.5V434.2M537.0 410.4V434.4M538.0 412.1V434.3M545.0 411.4V434.5M548.0 410.6V433.5M560.0 411.7V432.9M575.0 412.0V434.4M585.0 410.6V434.1M590.0 410.6V433.1M593.0 411.0V434.3M604.0 411.7V433.2M605.0 410.9V433.4M609.0 410.7V432.9M624.0 411.6V434.2M631.0 410.8V433.0M632.0 411.2V433.9M637.0 411.4V433.2M640.0 410.8V434.6M642.0 411.3V432.9M644.0 411.2V433.5M650.0 410.8V433.5M653.0 410.5V432.9M666.0 411.1V434.0M671.0 411.1V433.8M676.0 411.4V433.9M678.0 410.4V434.0M680.0 411.0V433.6M681.0 411.6V433.7M686.0 410.7V433.4M688.0 410.7V434.2M692.0 411.2V434.3M700.0 411.2V433.9M702.0 411.7V434.3M707.0 411.5V434.0M709.0 411.4V434.3M715.0 412.1V433.5M717.0 411.8V433.2M718.0 412.2V433.4M724.0 411.5V433.8M725.0 410.6V433.2M727.0 411.2V433.3M732.0 411.2V433.6M733.0 411.8V433.8M734.0 411.1V432.9M737.0 411.4V433.3M741.0 410.5V433.8M749.0 411.8V433.5M754.0 410.7V433.4M759.0 411.1V432.9M760.0 410.7V433.6M761.0 411.1V433.6M768.0 410.8V432.8M771.0 411.6V433.4M772.0 412.2V433.4M776.0 411.5V433.1M778.0 410.6V432.9M782.0 410.6V433.3M785.0 411.5V433.4M803.0 411.7V433.8M805.0 411.6V434.3M819.0 410.9V432.9M820.0 411.3V434.3M829.0 411.5V434.3M830.0 411.7V434.4M833.0 411.0V433.0M835.0 411.6V432.9M858.0 411.2V433.8M861.0 411.0V433.1M862.0 411.2V434.3M864.0 411.2V433.9M871.0 410.8V433.5M876.0 410.6V432.8M892.0 411.0V434.0M903.0 411.6V433.4" stroke="#b8ae18" stroke-width="1.05" fill="none"/>
<path d="M5.0 414.5V430.0M7.0 414.3V430.8M8.0 414.4V430.9M12.0 413.1V430.6M13.0 413.3V431.1M18.0 414.5V430.7M23.0 414.1V431.0M24.0 413.3V430.1M26.0 414.2V430.4M41.0 413.2V430.9M44.0 413.9V431.3M49.0 414.2V431.1M52.0 414.0V430.5M53.0 413.9V430.4M54.0 414.3V430.2M55.0 413.4V431.5M59.0 413.4V431.6M62.0 414.2V430.9M64.0 414.5V430.8M76.0 413.7V431.1M80.0 414.2V431.5M91.0 413.8V430.9M98.0 413.8V431.6M99.0 413.4V431.5M100.0 413.3V430.8M101.0 414.3V430.9M103.0 414.2V431.4M110.0 414.3V430.8M111.0 413.2V430.8M118.0 414.4V431.3M123.0 414.5V431.0M129.0 414.2V430.5M134.0 413.2V430.7M135.0 413.5V431.4M136.0 414.1V431.2M139.0 413.7V431.0M140.0 414.4V431.0M141.0 414.5V431.2M144.0 413.5V430.0M146.0 414.4V431.6M150.0 414.1V430.7M154.0 413.5V430.5M158.0 414.0V430.3M159.0 414.1V430.2M160.0 413.2V430.8M163.0 414.6V431.3M164.0 413.7V431.6M171.0 413.2V431.5M187.0 413.7V430.7M194.0 414.1V430.8M197.0 413.8V431.0M200.0 413.4V430.8M203.0 413.5V431.4M204.0 413.5V430.5M222.0 414.2V431.5M226.0 414.3V430.5M228.0 413.6V431.1M238.0 414.0V430.4M243.0 414.5V430.6M245.0 414.4V430.3M248.0 414.3V430.4M249.0 414.6V431.2M259.0 413.1V431.3M261.0 414.2V430.9M263.0 414.1V430.5M269.0 413.3V431.3M273.0 414.6V430.5M276.0 413.7V430.2M278.0 414.1V431.1M284.0 414.3V430.7M287.0 413.4V430.5M291.0 413.5V431.1M292.0 413.6V430.4M294.0 414.2V431.4M295.0 413.4V430.8M312.0 413.9V430.3M314.0 414.0V430.9M316.0 413.4V431.4M317.0 413.8V431.3M323.0 413.9V430.1M324.0 414.4V430.4M332.0 414.4V430.5M339.0 414.6V430.4M340.0 413.2V430.2M344.0 414.5V430.3M349.0 413.7V430.6M352.0 413.5V431.1M353.0 413.7V431.5M358.0 413.6V430.3M360.0 413.2V430.4M365.0 413.7V430.9M371.0 414.4V430.1M373.0 414.4V430.3M374.0 413.4V430.5M376.0 414.3V430.2M379.0 413.1V430.4M380.0 414.3V430.5M389.0 413.7V430.6M391.0 413.9V431.3M396.0 413.3V431.4M397.0 413.5V431.0M405.0 413.5V430.5M408.0 414.3V430.7M413.0 413.4V430.8M415.0 414.6V430.4M422.0 414.6V431.5M425.0 414.0V430.5M427.0 413.3V431.2M430.0 414.3V431.6M435.0 414.1V431.1M436.0 413.3V431.0M437.0 413.6V430.7M439.0 413.5V430.1M442.0 413.4V431.4M448.0 414.3V430.9M455.0 414.5V431.5M458.0 414.5V431.4M459.0 414.1V430.6M461.0 413.0V431.2M475.0 413.1V430.7M477.0 414.5V430.3M481.0 413.2V431.0M482.0 413.7V430.0M484.0 413.0V431.2M485.0 413.8V431.1M494.0 413.6V431.0M506.0 413.7V430.1M508.0 414.1V430.6M509.0 414.5V431.5M511.0 414.6V430.3M521.0 414.1V431.4M525.0 413.7V431.2M527.0 414.1V431.4M528.0 413.7V430.0M530.0 413.6V430.5M532.0 414.0V430.9M547.0 413.1V430.9M548.0 413.8V430.6M549.0 414.4V430.9M552.0 413.4V431.1M555.0 414.2V431.0M559.0 414.3V430.5M564.0 413.7V431.4M567.0 414.3V430.3M569.0 413.5V431.6M573.0 414.2V431.2M575.0 413.7V431.4M584.0 414.2V430.3M588.0 413.4V430.8M589.0 413.5V430.7M594.0 414.1V431.4M595.0 413.8V431.6M597.0 413.4V431.2M601.0 414.4V430.9M602.0 414.3V430.2M603.0 413.8V430.7M604.0 413.5V430.6M608.0 414.2V431.3M613.0 414.3V431.3M614.0 413.4V430.6M617.0 413.4V431.4M618.0 413.6V430.2M621.0 413.9V430.6M622.0 414.2V431.2M630.0 414.1V430.8M635.0 413.8V430.7M637.0 413.3V430.9M643.0 413.3V431.0M653.0 413.3V430.3M654.0 413.7V430.3M659.0 413.3V430.2M666.0 413.8V430.7M674.0 413.7V430.8M677.0 414.2V430.9M679.0 413.1V431.5M680.0 413.6V430.0M685.0 413.1V431.2M690.0 414.0V430.6M695.0 414.0V430.6M697.0 414.0V431.5M698.0 413.4V430.3M703.0 413.9V431.1M711.0 413.1V430.6M712.0 414.4V430.5M714.0 413.6V430.3M716.0 413.4V431.5M727.0 414.4V430.7M728.0 414.1V430.1M730.0 413.7V430.3M735.0 413.5V431.4M738.0 414.4V430.7M749.0 414.1V430.6M751.0 414.1V431.4M769.0 413.8V430.1M777.0 413.1V430.2M779.0 414.0V431.5M787.0 413.1V431.1M788.0 414.5V431.0M794.0 414.5V431.4M796.0 413.4V430.9M801.0 414.1V431.0M807.0 413.2V431.4M808.0 413.3V430.5M810.0 413.3V431.4M814.0 413.6V430.1M818.0 413.2V430.5M821.0 413.2V430.0M830.0 413.3V431.1M832.0 413.1V430.5M841.0 413.0V431.3M845.0 414.3V430.8M846.0 413.6V431.5M848.0 414.1V430.6M857.0 413.0V430.9M858.0 414.3V431.5M866.0 413.9V430.2M869.0 413.5V430.8M872.0 413.8V430.5M874.0 414.5V431.1M876.0 413.3V431.4M880.0 414.0V431.4M884.0 413.3V430.5M890.0 414.3V431.3M895.0 413.2V431.0M896.0 413.8V431.0M900.0 413.5V431.2M901.0 414.0V431.1M903.0 414.4V430.8M906.0 413.5V430.4M907.0 414.0V430.7M914.0 414.5V430.6" stroke="#9c9414" stroke-width="1.05" fill="none"/>
<path d="M11.0 413.0V431.1M14.0 414.5V430.2M19.0 414.4V431.4M21.0 413.3V430.1M22.0 414.2V430.3M25.0 413.8V430.8M28.0 414.2V430.5M29.0 413.8V431.4M32.0 414.3V431.4M33.0 414.0V430.8M34.0 413.9V431.3M35.0 413.0V430.3M36.0 414.3V430.7M37.0 414.0V431.4M40.0 414.1V430.1M42.0 413.2V431.2M45.0 413.9V430.9M46.0 414.3V431.6M56.0 413.1V430.8M57.0 413.5V430.9M58.0 414.3V430.4M60.0 413.2V430.5M65.0 413.7V430.4M67.0 414.4V430.9M69.0 413.4V430.7M73.0 413.2V431.1M77.0 413.5V431.4M79.0 413.9V430.3M82.0 413.3V431.0M83.0 413.7V431.4M84.0 413.5V430.1M85.0 413.7V431.2M88.0 413.2V431.5M89.0 414.4V431.3M90.0 414.2V431.2M93.0 413.7V431.5M94.0 414.5V431.1M95.0 414.1V431.5M102.0 413.4V430.3M107.0 413.8V431.3M108.0 413.5V430.7M109.0 413.4V430.6M112.0 414.2V431.0M113.0 414.4V431.2M116.0 413.3V430.0M119.0 414.0V431.3M120.0 414.1V431.4M124.0 413.6V430.5M126.0 413.8V431.3M131.0 414.3V430.8M132.0 413.6V430.3M138.0 413.4V431.0M142.0 413.0V431.4M145.0 414.6V430.2M148.0 414.3V431.4M149.0 413.4V431.0M153.0 414.5V431.0M157.0 414.2V431.1M161.0 414.5V430.0M162.0 414.3V430.6M165.0 413.7V430.1M166.0 414.4V430.4M167.0 413.4V431.1M168.0 413.6V430.6M169.0 413.5V430.6M172.0 414.3V430.5M174.0 413.0V431.0M175.0 414.0V431.5M176.0 413.6V430.8M177.0 413.2V430.4M179.0 414.4V430.0M183.0 413.6V431.1M185.0 414.5V430.7M189.0 414.0V430.7M191.0 414.4V431.5M195.0 413.5V430.7M198.0 414.3V431.3M199.0 414.2V430.1M202.0 413.9V430.1M205.0 413.2V430.3M206.0 413.2V430.3M214.0 413.4V431.2M215.0 413.2V430.2M219.0 414.2V430.9M221.0 414.4V431.3M225.0 413.0V431.1M229.0 414.2V431.3M230.0 413.5V430.2M233.0 414.4V431.2M234.0 413.2V430.8M240.0 413.5V430.9M241.0 414.5V430.2M246.0 414.3V431.3M250.0 413.7V430.7M252.0 413.2V431.5M253.0 413.9V430.9M255.0 413.3V430.1M256.0 413.9V430.9M257.0 413.5V430.8M258.0 414.6V430.7M260.0 414.3V430.2M262.0 413.9V431.5M264.0 414.5V430.3M265.0 413.1V430.7M267.0 413.1V430.4M271.0 414.3V430.6M274.0 414.0V431.4M275.0 413.4V430.3M280.0 414.3V430.0M281.0 414.6V431.6M283.0 414.2V431.1M290.0 414.0V430.4M293.0 413.3V430.4M296.0 414.4V430.1M297.0 414.2V430.5M298.0 413.4V430.1M300.0 413.3V430.9M302.0 413.0V430.2M303.0 413.3V431.4M304.0 413.2V431.3M305.0 413.9V430.9M306.0 413.8V430.4M309.0 413.2V430.2M310.0 413.2V430.1M313.0 413.8V430.5M321.0 413.6V430.1M322.0 414.5V430.2M328.0 414.2V431.5M330.0 414.3V431.1M331.0 413.0V430.8M333.0 414.6V430.1M342.0 414.5V431.6M343.0 413.1V430.0M346.0 413.8V431.4M347.0 414.3V431.4M350.0 414.4V430.8M351.0 414.6V431.3M356.0 414.2V431.3M357.0 414.0V430.4M362.0 413.9V430.1M364.0 414.2V430.7M366.0 413.9V431.0M367.0 413.7V431.0M370.0 413.6V431.2M372.0 413.7V431.1M381.0 414.4V430.1M382.0 413.2V430.7M383.0 413.4V430.1M385.0 413.9V431.1M386.0 414.3V431.3M392.0 414.0V430.2M393.0 413.4V430.7M394.0 414.3V431.4M395.0 413.7V430.1M399.0 414.2V430.2M400.0 414.5V431.2M402.0 413.4V431.4M404.0 413.8V431.3M406.0 413.0V430.5M407.0 413.1V431.2M409.0 413.4V431.1M410.0 413.6V430.3M416.0 413.1V430.0M417.0 414.4V431.4M419.0 413.2V431.3M423.0 413.6V431.3M424.0 414.5V431.2M426.0 413.3V430.2M428.0 413.8V430.7M431.0 413.2V430.6M438.0 413.6V430.3M441.0 414.3V430.7M444.0 413.2V430.5M446.0 413.2V430.4M450.0 414.2V430.2M451.0 414.1V431.0M453.0 413.4V430.2M457.0 413.7V430.7M465.0 413.4V430.1M468.0 414.4V430.5M469.0 413.9V430.3M470.0 414.5V431.6M476.0 413.4V430.9M478.0 413.7V431.1M479.0 413.6V430.0M487.0 414.2V430.5M489.0 413.1V430.9M490.0 413.3V430.2M492.0 413.3V431.2M495.0 413.2V430.2M496.0 414.5V431.1M497.0 413.3V430.1M498.0 414.3V431.5M499.0 414.2V430.0M502.0 413.0V430.1M503.0 413.9V431.0M504.0 414.5V430.1M507.0 413.6V430.7M512.0 414.3V430.0M514.0 414.6V430.4M516.0 414.4V431.3M518.0 413.2V430.1M519.0 413.3V430.9M520.0 413.7V431.6M522.0 414.3V430.2M526.0 414.6V431.3M529.0 413.5V430.8M531.0 414.3V431.3M535.0 414.2V430.8M536.0 414.1V430.6M537.0 413.3V430.9M538.0 414.4V430.0M539.0 413.5V431.2M545.0 414.2V430.6M551.0 413.4V430.4M554.0 414.0V430.3M556.0 413.7V430.9M562.0 413.6V431.5M568.0 413.4V430.2M574.0 413.5V430.0M577.0 414.2V431.1M578.0 414.2V430.5M581.0 413.1V431.4M582.0 413.2V431.5M585.0 413.4V430.7M586.0 413.4V431.4M590.0 414.5V430.7M592.0 413.0V430.0M596.0 413.6V431.3M598.0 413.7V431.0M599.0 413.0V430.3M606.0 413.1V431.6M609.0 413.3V430.2M620.0 413.8V431.6M623.0 413.8V431.1M625.0 414.3V430.0M629.0 413.4V430.3M631.0 414.1V430.4M633.0 414.1V430.8M636.0 413.2V430.8M638.0 413.8V430.8M639.0 413.2V431.6M640.0 414.6V431.1M641.0 413.5V430.4M642.0 414.3V431.6M644.0 413.6V430.1M645.0 413.9V430.1M647.0 413.1V430.1M648.0 413.9V431.5M650.0 414.5V431.0M651.0 414.4V431.2M652.0 413.8V430.0M657.0 414.4V430.8M658.0 413.2V430.8M660.0 414.4V431.4M661.0 413.7V431.4M662.0 414.5V430.4M663.0 414.0V430.2M667.0 413.8V431.4M671.0 413.4V430.4M681.0 414.1V431.5M682.0 413.9V431.4M683.0 413.7V431.1M689.0 413.2V431.3M699.0 413.6V430.1M700.0 413.4V430.7M702.0 414.6V430.6M704.0 414.1V431.6M705.0 413.5V430.6M707.0 413.4V430.8M708.0 413.4V430.4M709.0 413.6V431.2M713.0 413.7V430.5M718.0 414.5V430.8M719.0 413.5V430.9M721.0 413.3V430.6M722.0 413.8V430.1M725.0 413.1V430.9M731.0 413.2V430.2M733.0 414.5V430.6M736.0 413.1V430.5M741.0 414.4V430.8M742.0 414.1V430.5M743.0 413.4V430.9M745.0 414.1V431.5M746.0 414.6V431.2M748.0 414.4V430.4M750.0 414.1V430.8M752.0 414.4V430.7M753.0 414.1V430.8M754.0 413.9V431.6M755.0 413.1V430.0M759.0 414.3V430.7M761.0 413.6V431.5M763.0 414.4V431.5M764.0 414.1V430.7M765.0 413.4V431.2M768.0 413.2V431.0M774.0 413.8V430.2M778.0 413.8V430.0M780.0 414.2V431.3M783.0 414.3V430.3M785.0 413.5V430.2M789.0 414.4V430.7M792.0 413.2V431.4M793.0 414.3V430.9M798.0 413.8V431.2M800.0 413.6V430.4M803.0 413.9V431.2M805.0 413.7V430.7M809.0 414.5V431.2M813.0 414.1V430.9M815.0 414.0V431.5M817.0 413.8V431.2M819.0 414.5V430.1M823.0 413.7V431.4M824.0 413.4V431.4M826.0 413.9V431.2M828.0 413.5V431.5M829.0 413.8V430.3M833.0 413.2V430.8M835.0 413.8V431.5M837.0 413.3V430.1M839.0 413.3V431.5M847.0 413.4V430.5M852.0 414.5V430.0M855.0 413.6V430.3M861.0 413.9V430.1M862.0 413.9V430.9M863.0 414.1V431.4M865.0 413.6V431.4M873.0 414.1V430.8M875.0 414.5V431.3M878.0 413.8V431.3M879.0 414.4V430.9M881.0 414.0V431.5M882.0 413.5V430.4M883.0 414.5V430.6M886.0 413.7V430.2M887.0 414.2V430.4M888.0 414.0V431.0M889.0 413.8V430.5M891.0 414.4V430.0M892.0 414.5V431.5M905.0 414.2V430.7M909.0 414.2V431.5M910.0 413.4V430.7M911.0 413.3V431.2" stroke="#bcb218" stroke-width="1.05" fill="none"/>
<path d="M4.0 413.2V430.6M6.0 413.4V430.2M9.0 414.1V430.7M10.0 413.3V430.2M15.0 414.6V430.9M16.0 413.4V430.1M17.0 414.2V431.2M20.0 413.7V430.3M27.0 413.6V431.3M30.0 413.8V430.8M31.0 413.3V430.4M38.0 413.5V430.2M39.0 414.1V430.3M43.0 413.6V431.4M47.0 413.3V431.5M48.0 413.9V430.7M50.0 413.4V430.7M51.0 413.6V430.8M61.0 414.6V431.3M63.0 413.6V431.1M66.0 413.8V431.3M68.0 413.9V430.9M70.0 413.1V431.0M71.0 414.6V431.6M72.0 414.0V430.3M74.0 414.2V431.3M75.0 414.1V430.5M78.0 413.5V430.3M81.0 413.0V430.4M86.0 413.5V430.6M87.0 413.6V430.4M92.0 414.4V431.2M96.0 413.2V431.1M97.0 413.0V431.0M104.0 413.7V430.6M105.0 413.2V431.5M106.0 413.9V430.4M114.0 414.4V430.0M115.0 413.4V430.3M117.0 414.3V430.7M121.0 413.2V430.8M122.0 414.1V431.5M125.0 414.0V431.0M127.0 414.5V430.4M128.0 413.7V430.3M130.0 414.3V430.2M133.0 414.4V430.5M137.0 413.5V430.2M143.0 413.9V430.8M147.0 414.3V430.5M151.0 414.0V430.6M152.0 414.3V430.7M155.0 414.0V430.5M156.0 414.2V430.9M170.0 413.3V431.1M173.0 414.3V430.7M178.0 414.0V431.4M180.0 413.1V430.2M181.0 413.4V430.1M182.0 414.4V431.2M184.0 414.0V431.1M186.0 413.9V430.0M188.0 414.5V430.6M190.0 414.5V431.6M192.0 413.0V430.6M193.0 413.4V431.0M196.0 414.2V430.1M201.0 413.3V430.3M207.0 413.3V430.1M208.0 413.4V431.6M209.0 414.3V431.4M210.0 414.2V430.6M211.0 414.6V431.1M212.0 414.5V431.1M213.0 414.1V430.2M216.0 413.4V430.5M217.0 413.2V430.4M218.0 413.5V431.4M220.0 413.3V431.4M223.0 413.1V431.2M224.0 414.4V430.9M227.0 413.9V430.5M231.0 413.8V431.0M232.0 414.5V430.9M235.0 413.3V430.9M236.0 413.8V431.0M237.0 414.4V431.0M239.0 414.1V431.1M242.0 413.8V430.1M244.0 413.7V430.0M247.0 413.7V430.9M251.0 414.5V430.6M254.0 413.7V431.0M266.0 413.4V431.5M268.0 413.4V430.9M270.0 413.7V430.5M272.0 413.6V430.7M277.0 414.2V431.1M279.0 413.6V430.4M282.0 413.0V430.7M285.0 413.8V431.5M286.0 413.3V430.8M288.0 414.0V430.9M289.0 414.1V431.3M299.0 413.0V431.1M301.0 413.0V430.3M307.0 413.5V430.1M308.0 413.9V430.8M311.0 413.1V430.5M315.0 413.3V430.5M318.0 413.2V430.6M319.0 413.2V431.3M320.0 413.8V430.1M325.0 414.0V431.4M326.0 413.2V430.3M327.0 413.5V430.5M329.0 413.6V430.3M334.0 413.1V430.5M335.0 414.0V431.6M336.0 413.7V430.6M337.0 413.4V431.6M338.0 413.4V431.5M341.0 413.9V431.4M345.0 413.1V430.5M348.0 413.7V431.2M354.0 413.8V430.2M355.0 414.2V430.4M359.0 414.6V431.4M361.0 414.0V430.4M363.0 414.0V430.7M368.0 413.1V431.6M369.0 413.6V430.9M375.0 413.8V431.0M377.0 413.2V430.7M378.0 414.1V430.9M384.0 413.2V431.2M387.0 413.5V430.1M388.0 413.5V430.6M390.0 413.5V431.5M398.0 413.6V430.8M401.0 413.8V430.5M403.0 413.6V430.5M411.0 414.1V430.2M412.0 413.2V431.5M414.0 413.9V430.9M418.0 413.6V430.2M420.0 414.6V430.6M421.0 413.5V431.2M429.0 414.4V430.9M432.0 413.2V431.1M433.0 414.1V431.4M434.0 414.3V430.9M440.0 414.5V430.4M443.0 413.5V430.9M445.0 414.3V430.2M447.0 413.6V431.1M449.0 413.5V431.1M452.0 414.2V430.7M454.0 413.5V431.5M456.0 413.8V430.7M460.0 414.1V430.1M462.0 413.2V430.7M463.0 413.3V430.8M464.0 414.2V431.0M466.0 414.1V431.1M467.0 413.8V430.3M471.0 414.1V430.8M472.0 413.2V431.1M473.0 414.3V431.0M474.0 414.0V431.5M480.0 414.2V430.3M483.0 414.5V431.2M486.0 413.9V430.6M488.0 413.8V430.9M491.0 414.4V430.3M493.0 414.6V431.4M500.0 413.2V431.0M501.0 413.9V430.1M505.0 413.4V430.3M510.0 413.6V431.4M513.0 413.9V431.2M515.0 414.3V430.9M517.0 413.0V430.7M523.0 413.3V431.6M524.0 414.0V431.0M533.0 413.2V430.4M534.0 413.6V431.4M540.0 414.2V431.2M541.0 414.6V431.0M542.0 413.7V430.6M543.0 413.3V431.0M544.0 413.1V431.1M546.0 414.1V431.6M550.0 413.6V430.6M553.0 413.8V431.5M557.0 414.5V430.1M558.0 414.1V431.4M560.0 413.5V431.2M561.0 413.9V431.6M563.0 414.4V430.3M565.0 414.3V430.3M566.0 413.2V431.6M570.0 413.7V430.4M571.0 413.9V430.0M572.0 414.5V430.1M576.0 413.8V430.5M579.0 413.5V430.2M580.0 413.9V430.9M583.0 414.2V430.6M587.0 414.0V430.1M591.0 413.9V430.3M593.0 413.2V431.4M600.0 413.8V431.6M605.0 414.0V430.6M607.0 414.4V430.2M610.0 414.3V431.0M611.0 413.4V430.7M612.0 413.4V431.0M615.0 413.8V430.2M616.0 413.3V430.7M619.0 413.1V431.2M624.0 413.6V430.9M626.0 413.9V430.5M627.0 414.5V430.0M628.0 413.3V430.7M632.0 414.6V430.3M634.0 413.7V431.0M646.0 414.0V430.3M649.0 413.6V430.6M655.0 414.3V431.4M656.0 413.6V430.3M664.0 414.0V431.5M665.0 413.3V431.2M668.0 413.9V431.1M669.0 414.5V430.1M670.0 413.1V431.0M672.0 413.2V430.8M673.0 414.4V430.9M675.0 413.3V431.2M676.0 413.0V430.6M678.0 413.4V430.2M684.0 414.1V431.4M686.0 414.5V430.0M687.0 413.2V430.3M688.0 413.8V430.0M691.0 413.0V431.6M692.0 413.4V431.2M693.0 413.2V430.3M694.0 413.9V430.6M696.0 413.8V431.4M701.0 413.6V430.9M706.0 413.7V430.6M710.0 414.4V430.1M715.0 413.9V431.4M717.0 413.9V430.1M720.0 413.8V431.6M723.0 413.1V431.6M724.0 414.0V430.6M726.0 414.0V431.5M729.0 414.0V430.3M732.0 413.0V431.5M734.0 413.2V430.7M737.0 414.4V430.4M739.0 413.8V431.5M740.0 413.3V430.0M744.0 413.4V431.3M747.0 413.5V431.5M756.0 414.0V431.3M757.0 413.5V430.3M758.0 414.0V430.4M760.0 414.3V431.2M762.0 414.1V430.8M766.0 413.5V430.1M767.0 414.6V431.2M770.0 413.6V431.2M771.0 413.1V430.2M772.0 413.1V430.1M773.0 413.6V430.9M775.0 413.5V431.6M776.0 414.0V430.6M781.0 414.5V430.3M782.0 414.5V430.5M784.0 414.1V431.3M786.0 413.5V430.0M790.0 413.7V430.9M791.0 413.4V430.8M795.0 413.1V430.6M797.0 413.7V430.9M799.0 413.3V431.4M802.0 413.5V430.9M804.0 413.7V430.5M806.0 414.0V430.9M811.0 413.9V431.2M812.0 414.1V430.9M816.0 414.4V431.0M820.0 414.5V430.3M822.0 414.0V430.6M825.0 413.9V430.2M827.0 413.3V430.6M831.0 413.4V430.6M834.0 413.6V430.7M836.0 413.9V431.0M838.0 413.6V430.6M840.0 413.3V430.7M842.0 414.0V430.0M843.0 413.8V431.6M844.0 413.8V430.2M849.0 414.5V431.1M850.0 413.6V430.2M851.0 414.2V430.6M853.0 413.5V430.3M854.0 414.3V430.3M856.0 413.9V430.2M859.0 413.4V431.4M860.0 414.1V430.9M864.0 414.5V430.4M867.0 413.3V430.4M868.0 413.8V430.2M870.0 413.7V431.1M871.0 413.6V430.9M877.0 413.8V431.5M885.0 413.1V430.9M893.0 413.3V431.5M894.0 413.3V430.4M897.0 413.8V430.1M898.0 413.3V430.1M899.0 413.9V430.8M902.0 413.9V430.3M904.0 413.4V430.5M908.0 413.5V430.8M912.0 413.6V430.2M913.0 413.4V430.7" stroke="#d6cc1a" stroke-width="1.05" fill="none"/>
<path d="M4.0 414.7V429.5M13.0 414.7V429.5M14.0 414.5V429.2M17.0 414.6V429.0M18.0 414.7V429.9M19.0 415.0V430.0M21.0 415.1V429.6M22.0 415.2V429.5M24.0 414.3V429.2M25.0 415.2V429.3M26.0 414.9V429.7M29.0 414.3V429.7M31.0 414.7V430.0M32.0 414.6V429.9M37.0 414.6V429.7M39.0 415.2V429.3M43.0 414.8V429.6M44.0 414.7V429.4M46.0 414.3V429.2M50.0 414.7V430.0M51.0 414.7V429.3M52.0 414.3V429.7M53.0 414.3V429.9M56.0 415.0V429.9M57.0 415.2V429.8M59.0 414.8V429.9M61.0 414.4V429.1M63.0 415.1V429.2M68.0 414.7V429.4M72.0 414.5V429.6M73.0 414.5V429.0M79.0 414.9V429.1M81.0 414.2V429.8M82.0 414.4V429.5M83.0 414.9V429.6M84.0 414.9V429.7M85.0 415.0V429.2M89.0 414.6V429.0M90.0 414.8V429.9M93.0 414.8V429.9M94.0 414.4V429.1M96.0 414.3V429.6M99.0 414.3V429.3M101.0 414.4V429.1M103.0 414.7V429.7M105.0 414.2V429.4M110.0 414.7V429.6M111.0 414.6V429.8M112.0 414.9V429.1M113.0 415.0V429.9M115.0 414.4V429.0M117.0 414.8V429.6M121.0 414.3V429.3M123.0 415.0V429.4M125.0 414.8V429.5M126.0 414.6V429.3M130.0 414.4V429.6M133.0 414.6V430.0M134.0 415.0V429.9M135.0 414.7V429.5M136.0 414.3V429.3M137.0 414.3V429.5M138.0 415.2V430.0M139.0 414.3V429.4M143.0 414.7V429.6M147.0 414.9V429.8M149.0 414.6V429.3M150.0 415.1V429.9M155.0 414.7V429.4M159.0 414.7V429.9M160.0 414.5V429.8M165.0 414.8V429.7M166.0 414.7V429.0M169.0 415.0V429.5M172.0 414.3V429.8M174.0 414.3V429.4M175.0 414.4V429.4M178.0 414.6V429.5M179.0 415.2V429.7M181.0 414.7V429.2M182.0 414.4V430.0M183.0 414.7V429.0M185.0 415.0V429.5M186.0 415.1V430.0M187.0 414.7V429.0M188.0 414.5V429.2M189.0 415.1V430.0M190.0 414.5V429.2M191.0 414.9V429.1M193.0 414.4V429.9M194.0 414.9V429.4M195.0 414.5V429.9M198.0 414.4V429.4M202.0 414.9V429.6M209.0 414.3V429.3M210.0 414.3V429.4M211.0 414.5V429.1M213.0 414.7V429.6M214.0 415.0V429.1M215.0 414.9V429.8M216.0 414.9V429.2M217.0 415.2V429.3M218.0 415.0V429.2M219.0 415.1V429.6M220.0 414.6V429.5M223.0 415.1V430.0M224.0 414.2V429.4M226.0 414.2V429.0M231.0 415.1V429.2M235.0 414.8V429.3M236.0 414.9V429.1M237.0 414.7V429.5M239.0 414.9V429.8M241.0 414.2V429.6M244.0 414.5V429.4M245.0 414.7V429.7M250.0 414.9V430.0M252.0 414.6V429.8M254.0 415.1V429.7M255.0 414.8V429.6M257.0 414.4V429.6M258.0 414.9V429.1M259.0 414.2V429.9M260.0 414.3V429.6M261.0 414.9V429.0M263.0 414.8V429.1M266.0 414.8V430.0M268.0 414.9V429.0M271.0 415.2V429.6M272.0 414.5V429.3M274.0 414.6V429.2M280.0 414.6V429.2M282.0 415.0V429.2M283.0 414.8V429.2M284.0 414.7V429.5M287.0 415.1V429.1M289.0 414.8V430.0M293.0 414.3V429.1M295.0 414.7V429.6M296.0 414.7V429.0M298.0 415.0V429.6M300.0 414.9V429.6M307.0 414.5V429.6M310.0 415.0V429.1M311.0 414.7V429.8M312.0 415.1V429.4M313.0 414.8V429.8M314.0 414.6V429.4M315.0 414.7V429.7M316.0 414.9V429.6M318.0 415.0V429.4M325.0 414.5V430.0M326.0 414.5V429.5M328.0 414.8V429.6M331.0 414.9V429.9M333.0 414.3V429.9M334.0 415.1V429.1M337.0 415.0V429.7M338.0 414.9V429.0M339.0 414.6V429.6M340.0 414.6V429.2M341.0 414.7V429.7M343.0 414.4V429.4M345.0 414.5V429.1M347.0 414.4V429.5M349.0 415.0V429.7M350.0 414.3V429.3M355.0 414.8V429.2M356.0 414.3V429.3M357.0 415.0V429.6M361.0 414.7V429.5M363.0 414.4V429.1M366.0 414.4V429.4M367.0 414.2V429.9M368.0 414.7V429.5M369.0 414.2V429.5M370.0 414.3V429.9M371.0 414.6V429.8M372.0 414.4V429.3M376.0 414.9V429.1M379.0 414.2V429.8M380.0 415.1V429.7M381.0 415.2V429.3M382.0 414.3V429.6M383.0 415.1V429.6M387.0 415.2V429.4M390.0 414.9V429.2M391.0 414.3V429.9M393.0 415.2V429.3M394.0 414.4V429.6M396.0 414.2V429.3M399.0 415.1V429.3M400.0 414.4V429.4M401.0 415.1V429.7M402.0 414.7V429.1M403.0 415.1V429.3M406.0 414.9V429.9M409.0 414.7V429.0M417.0 414.9V429.6M418.0 414.7V429.9M419.0 414.3V429.3M420.0 415.1V429.9M423.0 414.7V429.2M427.0 415.0V429.5M428.0 414.7V429.9M429.0 415.0V429.2M430.0 414.5V429.9M431.0 414.7V429.2M435.0 414.3V429.0M436.0 414.8V429.4M437.0 414.5V429.6M439.0 414.7V429.1M440.0 414.5V429.4M442.0 414.7V429.2M443.0 414.8V429.7M445.0 415.0V429.3M447.0 414.9V429.2M448.0 415.1V429.7M451.0 414.8V429.2M452.0 415.1V429.8M454.0 414.2V429.4M457.0 414.2V429.8M459.0 414.9V429.1M461.0 415.2V429.2M462.0 414.5V429.5M465.0 414.6V429.3M466.0 414.9V429.1M467.0 414.2V429.1M468.0 415.0V429.6M469.0 414.2V429.6M471.0 415.1V429.2M472.0 414.6V429.6M476.0 414.8V429.8M477.0 414.8V429.6M478.0 415.1V429.9M482.0 415.1V429.4M485.0 414.5V429.3M487.0 414.8V429.7M489.0 414.9V429.3M492.0 414.6V430.0M493.0 414.9V429.5M497.0 414.8V429.7M498.0 414.7V429.7M499.0 414.9V429.4M500.0 415.2V429.9M501.0 414.5V429.6M502.0 415.1V429.9M504.0 414.6V429.1M506.0 415.0V429.6M507.0 414.8V430.0M509.0 415.1V429.7M511.0 414.5V429.1M513.0 414.6V429.1M514.0 414.9V429.8M516.0 415.2V429.4M517.0 414.8V429.1M525.0 414.7V430.0M527.0 415.0V430.0M528.0 414.5V429.4M529.0 414.8V429.1M530.0 414.3V430.0M532.0 414.3V430.0M534.0 414.8V429.8M536.0 414.5V429.9M537.0 414.4V430.0M543.0 414.4V429.3M545.0 415.0V429.9M547.0 414.2V429.3M548.0 414.8V429.5M553.0 414.7V429.3M554.0 415.1V429.7M557.0 414.9V429.3M562.0 414.3V429.3M564.0 415.1V429.6M565.0 415.2V429.2M567.0 414.7V429.5M568.0 415.0V429.7M571.0 414.6V429.5M572.0 415.0V429.1M574.0 414.9V429.5M576.0 414.6V429.9M577.0 415.0V429.7M578.0 414.7V429.1M580.0 415.0V429.6M581.0 415.1V429.7M582.0 415.2V429.7M587.0 414.5V430.0M592.0 414.5V429.6M596.0 415.1V429.0M600.0 414.8V429.2M601.0 415.0V429.5M602.0 414.5V429.4M604.0 414.8V429.6M608.0 415.2V429.5M612.0 415.2V429.1M613.0 415.1V429.0M614.0 414.4V429.8M615.0 414.3V429.8M617.0 414.9V429.7M618.0 414.4V430.0M621.0 414.6V429.1M623.0 414.3V429.9M626.0 414.3V429.2M627.0 415.0V429.2M628.0 414.7V429.8M629.0 414.9V429.6M631.0 415.0V429.6M632.0 415.1V429.8M633.0 414.4V429.4M636.0 414.3V429.7M639.0 415.0V429.7M640.0 414.2V429.5M646.0 414.9V429.1M647.0 414.8V429.8M648.0 414.8V429.7M650.0 414.6V429.9M653.0 415.1V429.1M655.0 414.4V429.5M658.0 414.6V429.5M663.0 414.3V429.4M665.0 414.2V429.5M666.0 414.6V429.6M669.0 414.5V429.8M671.0 414.8V429.7M673.0 415.0V429.1M674.0 414.4V429.6M676.0 415.1V429.9M682.0 414.6V429.8M683.0 415.1V429.7M685.0 414.2V429.9M687.0 415.1V429.6M688.0 415.1V429.2M690.0 414.5V429.8M693.0 414.8V430.0M699.0 414.4V429.5M701.0 414.6V429.1M702.0 414.7V429.4M705.0 414.9V429.3M708.0 414.8V429.8M709.0 414.5V429.6M710.0 415.2V429.5M713.0 414.4V429.8M714.0 414.5V430.0M715.0 414.8V429.9M717.0 415.0V429.3M718.0 414.7V429.7M720.0 415.2V429.9M721.0 415.1V429.9M722.0 414.6V429.3M724.0 414.4V430.0M725.0 414.8V429.1M726.0 414.5V429.1M728.0 414.4V429.4M729.0 414.7V429.2M730.0 414.5V429.6M732.0 414.5V429.4M733.0 415.1V429.5M735.0 414.9V429.4M738.0 414.4V429.6M739.0 414.6V429.7M740.0 414.8V429.9M742.0 414.2V429.5M746.0 414.5V429.9M748.0 414.5V429.3M750.0 414.2V429.8M752.0 414.6V429.5M753.0 415.1V429.5M754.0 414.2V429.4M757.0 414.8V429.6M758.0 414.3V429.1M761.0 415.1V429.2M763.0 414.6V429.0M765.0 414.9V429.1M766.0 415.1V429.2M767.0 414.6V429.3M768.0 414.5V429.8M769.0 415.1V429.0M772.0 414.4V429.7M773.0 414.9V429.8M774.0 415.1V429.2M776.0 415.0V429.2M777.0 414.7V429.4M778.0 414.4V429.3M786.0 414.9V429.7M787.0 414.5V429.2M789.0 415.0V429.4M797.0 415.0V429.6M798.0 414.3V429.5M801.0 414.9V429.4M806.0 414.7V429.8M808.0 414.4V429.8M810.0 414.7V429.0M811.0 414.6V429.0M813.0 414.4V429.5M815.0 414.8V429.7M817.0 414.3V429.8M821.0 414.9V429.5M822.0 414.8V429.9M823.0 414.5V429.8M825.0 414.9V429.6M828.0 414.5V429.8M833.0 415.0V429.9M835.0 414.3V429.1M838.0 414.7V429.7M839.0 414.5V429.7M840.0 415.1V429.6M842.0 415.2V429.1M847.0 415.1V430.0M849.0 414.3V429.4M852.0 415.1V429.7M853.0 414.7V429.1M855.0 414.3V429.6M858.0 414.3V429.7M861.0 414.8V430.0M863.0 414.6V429.7M866.0 414.5V429.5M868.0 414.8V429.7M870.0 414.2V429.9M873.0 415.2V429.6M877.0 414.7V430.0M879.0 414.4V429.0M882.0 414.4V429.4M883.0 415.1V429.8M884.0 415.1V429.3M885.0 414.6V429.3M886.0 414.9V429.8M893.0 414.9V429.6M894.0 414.7V429.0M895.0 414.5V429.5M898.0 414.7V429.0M901.0 415.2V429.9M903.0 414.7V429.2M907.0 415.0V429.7M908.0 415.0V429.4M909.0 414.2V429.2M910.0 414.4V429.6M911.0 415.0V429.2M913.0 415.2V430.0M914.0 414.3V429.8" stroke="#d6cc1a" stroke-width="1.05" fill="none"/>
<path d="M5.0 414.5V429.1M6.0 414.3V429.2M7.0 414.5V429.3M8.0 415.1V429.9M9.0 414.4V429.2M10.0 414.7V429.1M11.0 415.2V429.0M12.0 414.9V429.3M15.0 414.9V429.3M16.0 414.8V429.3M20.0 415.0V429.1M23.0 414.3V430.0M27.0 414.3V429.2M28.0 414.8V429.3M30.0 414.8V429.9M33.0 414.3V429.3M34.0 414.5V429.5M35.0 414.8V429.6M36.0 414.5V429.0M38.0 415.1V429.3M40.0 415.0V429.9M41.0 415.0V429.2M42.0 414.3V429.5M45.0 414.5V429.7M47.0 414.3V429.6M48.0 415.1V429.0M49.0 414.5V429.9M54.0 415.1V430.0M55.0 415.0V429.3M58.0 415.0V430.0M60.0 414.9V429.8M62.0 414.9V429.4M64.0 414.8V429.5M65.0 414.7V429.7M66.0 414.4V430.0M67.0 415.1V429.3M69.0 414.7V429.5M70.0 415.1V429.5M71.0 414.9V429.9M74.0 414.6V429.3M75.0 414.4V429.4M76.0 414.6V429.1M77.0 414.5V429.9M78.0 414.6V429.6M80.0 415.0V429.8M86.0 414.5V429.7M87.0 414.3V429.0M88.0 414.7V429.9M91.0 414.9V429.2M92.0 414.4V429.8M95.0 414.5V429.0M97.0 414.3V429.2M98.0 415.0V429.7M100.0 415.0V429.8M102.0 414.4V429.3M104.0 414.9V429.3M106.0 414.2V429.2M107.0 414.6V429.5M108.0 415.1V429.4M109.0 415.0V429.5M114.0 414.9V429.2M116.0 414.9V429.7M118.0 414.9V429.2M119.0 415.0V429.9M120.0 414.8V429.4M122.0 414.9V429.7M124.0 414.3V429.2M127.0 414.3V429.5M128.0 414.3V429.1M129.0 414.5V429.8M131.0 415.1V429.4M132.0 414.6V429.3M140.0 415.0V429.9M141.0 414.6V429.0M142.0 414.8V429.7M144.0 414.3V429.6M145.0 414.6V429.5M146.0 415.0V429.3M148.0 414.2V429.8M151.0 415.1V429.4M152.0 415.1V429.6M153.0 414.2V429.2M154.0 415.0V429.9M156.0 414.4V429.4M157.0 414.5V429.2M158.0 414.9V429.6M161.0 414.6V429.1M162.0 415.1V429.1M163.0 414.6V429.8M164.0 414.5V429.2M167.0 414.6V429.0M168.0 414.7V429.4M170.0 415.1V429.4M171.0 414.7V429.9M173.0 414.6V429.9M176.0 414.2V429.3M177.0 414.7V429.6M180.0 415.0V429.2M184.0 414.6V429.5M192.0 415.0V429.9M196.0 415.0V429.5M197.0 415.2V429.8M199.0 414.7V429.2M200.0 414.5V429.3M201.0 414.2V429.5M203.0 414.9V429.0M204.0 414.8V429.0M205.0 414.5V429.9M206.0 414.3V429.1M207.0 414.9V429.1M208.0 414.9V429.4M212.0 414.9V429.2M221.0 414.5V429.9M222.0 414.9V429.3M225.0 414.4V429.5M227.0 414.3V429.3M228.0 414.7V429.2M229.0 415.1V429.3M230.0 414.3V429.2M232.0 415.0V429.6M233.0 415.0V429.9M234.0 414.8V429.3M238.0 414.5V429.7M240.0 414.7V429.3M242.0 414.3V429.0M243.0 414.7V430.0M246.0 414.9V429.5M247.0 414.8V429.9M248.0 414.7V429.2M249.0 414.6V429.1M251.0 414.6V429.5M253.0 414.8V429.9M256.0 415.2V429.9M262.0 414.6V429.4M264.0 414.3V429.8M265.0 414.9V429.2M267.0 415.0V429.7M269.0 414.6V429.7M270.0 415.2V429.6M273.0 414.7V429.1M275.0 415.0V429.3M276.0 415.1V429.0M277.0 414.6V430.0M278.0 414.6V430.0M279.0 414.5V429.1M281.0 414.9V429.5M285.0 414.9V429.7M286.0 414.6V429.3M288.0 414.6V429.6M290.0 415.1V429.9M291.0 414.8V429.0M292.0 414.9V429.2M294.0 414.9V429.8M297.0 415.2V429.1M299.0 414.8V429.3M301.0 414.7V429.4M302.0 414.5V430.0M303.0 414.7V429.4M304.0 415.1V429.6M305.0 414.6V429.3M306.0 414.6V429.6M308.0 414.3V429.0M309.0 414.8V429.4M317.0 414.9V429.6M319.0 414.9V429.5M320.0 414.2V429.0M321.0 414.6V429.1M322.0 414.8V430.0M323.0 414.6V429.4M324.0 414.3V429.2M327.0 414.4V429.7M329.0 414.4V430.0M330.0 414.9V429.9M332.0 414.9V429.8M335.0 414.8V429.4M336.0 414.9V429.5M342.0 415.0V429.9M344.0 414.4V429.8M346.0 415.0V429.6M348.0 414.3V429.6M351.0 415.0V429.3M352.0 414.5V429.7M353.0 414.2V429.1M354.0 414.7V429.6M358.0 415.1V429.7M359.0 414.8V429.5M360.0 414.9V429.2M362.0 414.2V429.2M364.0 414.9V429.3M365.0 415.1V429.9M373.0 414.5V429.9M374.0 414.3V429.4M375.0 414.7V429.1M377.0 415.0V429.6M378.0 415.0V429.6M384.0 414.5V430.0M385.0 414.3V429.2M386.0 414.5V429.2M388.0 415.1V429.6M389.0 414.9V429.3M392.0 414.3V429.2M395.0 415.1V429.1M397.0 414.8V429.2M398.0 414.8V429.2M404.0 415.1V429.1M405.0 414.7V430.0M407.0 414.5V429.6M408.0 415.0V429.3M410.0 414.8V429.9M411.0 414.2V429.9M412.0 414.4V429.2M413.0 414.4V429.1M414.0 414.9V429.0M415.0 414.7V429.2M416.0 414.9V429.9M421.0 414.8V429.8M422.0 414.7V429.4M424.0 414.4V429.7M425.0 414.3V429.5M426.0 414.6V430.0M432.0 415.0V429.0M433.0 414.2V429.9M434.0 414.3V429.1M438.0 415.0V429.3M441.0 414.2V429.3M444.0 414.9V429.6M446.0 414.9V429.1M449.0 414.8V429.0M450.0 415.0V429.6M453.0 414.3V429.8M455.0 414.6V429.2M456.0 414.9V429.9M458.0 414.3V429.4M460.0 415.2V429.0M463.0 414.3V429.1M464.0 414.8V429.6M470.0 414.3V430.0M473.0 414.5V429.6M474.0 414.4V429.6M475.0 414.7V429.9M479.0 414.3V429.4M480.0 414.6V429.4M481.0 414.5V429.9M483.0 414.6V429.7M484.0 414.8V429.1M486.0 414.7V429.2M488.0 414.5V429.8M490.0 414.6V429.9M491.0 414.5V429.3M494.0 415.0V429.5M495.0 414.2V429.6M496.0 414.3V429.1M503.0 414.8V429.7M505.0 414.7V429.9M508.0 414.9V429.9M510.0 414.5V429.4M512.0 415.2V429.7M515.0 414.5V429.1M518.0 415.0V429.4M519.0 414.3V429.2M520.0 414.8V429.7M521.0 414.7V429.7M522.0 415.0V429.3M523.0 414.9V429.6M524.0 415.1V429.3M526.0 415.0V429.4M531.0 414.7V429.6M533.0 414.2V429.7M535.0 414.8V429.0M538.0 414.5V429.3M539.0 415.0V430.0M540.0 415.1V429.4M541.0 414.6V429.2M542.0 414.6V429.5M544.0 414.9V430.0M546.0 414.9V429.5M549.0 414.3V429.0M550.0 415.1V429.8M551.0 414.6V429.3M552.0 414.6V429.1M555.0 414.3V429.9M556.0 414.4V429.6M558.0 414.3V430.0M559.0 414.3V429.3M560.0 415.1V429.2M561.0 415.0V429.5M563.0 414.8V429.5M566.0 415.2V429.6M569.0 414.4V429.7M570.0 414.4V429.3M573.0 414.4V430.0M575.0 415.2V429.3M579.0 414.3V429.6M583.0 414.8V429.7M584.0 414.6V429.2M585.0 414.9V429.4M586.0 414.6V429.9M588.0 414.7V429.5M589.0 414.3V429.9M590.0 414.2V429.1M591.0 415.2V429.1M593.0 414.7V429.3M594.0 414.9V429.5M595.0 414.7V429.4M597.0 414.8V429.9M598.0 415.1V429.8M599.0 414.5V429.3M603.0 414.4V429.9M605.0 414.9V429.6M606.0 414.3V429.4M607.0 414.4V429.3M609.0 414.9V429.8M610.0 414.8V429.6M611.0 415.0V429.3M616.0 414.2V429.4M619.0 414.6V429.7M620.0 414.6V429.5M622.0 415.0V429.1M624.0 414.7V429.6M625.0 414.4V429.4M630.0 414.6V429.7M634.0 414.2V429.1M635.0 415.0V429.6M637.0 414.5V429.1M638.0 415.1V429.9M641.0 414.4V429.7M642.0 414.4V429.2M643.0 414.6V429.9M644.0 414.5V429.9M645.0 414.8V429.7M649.0 414.7V430.0M651.0 414.8V429.4M652.0 414.8V429.2M654.0 415.0V429.4M656.0 415.0V429.1M657.0 415.1V429.6M659.0 414.4V430.0M660.0 414.4V429.1M661.0 414.3V429.5M662.0 414.4V429.0M664.0 414.8V429.1M667.0 414.5V429.3M668.0 414.5V429.1M670.0 414.9V429.6M672.0 414.9V430.0M675.0 414.5V429.0M677.0 415.2V429.3M678.0 414.6V429.0M679.0 414.5V429.2M680.0 414.4V429.6M681.0 414.8V429.1M684.0 415.0V429.4M686.0 415.2V429.0M689.0 414.5V429.9M691.0 414.5V429.8M692.0 414.6V430.0M694.0 414.2V429.5M695.0 414.7V429.8M696.0 415.2V429.2M697.0 415.2V429.6M698.0 414.6V429.2M700.0 415.2V429.7M703.0 414.5V429.4M704.0 415.2V429.4M706.0 414.9V429.6M707.0 414.6V429.8M711.0 414.6V429.5M712.0 414.7V429.5M716.0 414.7V429.4M719.0 414.6V429.8M723.0 415.2V429.7M727.0 414.6V429.9M731.0 414.9V429.3M734.0 414.9V429.5M736.0 414.5V429.5M737.0 415.0V429.4M741.0 414.9V429.8M743.0 414.6V429.4M744.0 414.2V429.9M745.0 415.1V429.3M747.0 415.0V429.6M749.0 414.6V429.1M751.0 414.9V429.9M755.0 414.9V429.1M756.0 414.9V429.9M759.0 414.5V429.5M760.0 414.3V429.4M762.0 414.6V429.5M764.0 415.2V429.1M770.0 414.7V429.3M771.0 414.6V429.5M775.0 415.0V429.8M779.0 414.6V429.4M780.0 414.5V429.9M781.0 415.0V429.6M782.0 415.0V429.3M783.0 415.2V430.0M784.0 414.7V429.2M785.0 414.3V429.4M788.0 414.5V429.3M790.0 414.8V429.0M791.0 414.7V429.4M792.0 414.5V429.7M793.0 415.0V429.0M794.0 414.7V429.6M795.0 414.8V429.1M796.0 414.6V429.7M799.0 414.5V429.3M800.0 414.9V429.4M802.0 414.7V429.6M803.0 414.8V429.7M804.0 414.4V429.8M805.0 414.7V429.2M807.0 414.8V429.6M809.0 414.5V429.9M812.0 414.7V429.6M814.0 414.3V429.5M816.0 415.0V429.6M818.0 415.0V429.9M819.0 415.1V429.6M820.0 414.9V429.7M824.0 414.9V429.5M826.0 414.4V430.0M827.0 414.9V429.6M829.0 415.1V429.7M830.0 414.7V429.9M831.0 414.7V429.0M832.0 415.1V429.7M834.0 414.4V429.3M836.0 414.7V429.0M837.0 414.4V429.3M841.0 415.0V429.3M843.0 414.5V429.2M844.0 414.2V429.6M845.0 414.7V429.1M846.0 415.0V429.0M848.0 414.3V429.5M850.0 414.4V429.8M851.0 414.7V430.0M854.0 414.6V429.3M856.0 414.3V430.0M857.0 414.4V429.9M859.0 414.9V429.7M860.0 414.5V429.4M862.0 414.4V429.4M864.0 415.0V429.2M865.0 414.7V429.5M867.0 414.3V429.3M869.0 414.7V429.7M871.0 414.3V429.6M872.0 414.2V429.1M874.0 414.8V429.9M875.0 414.9V429.2M876.0 414.9V429.9M878.0 414.3V429.4M880.0 414.9V429.4M881.0 415.1V429.9M887.0 414.3V429.1M888.0 414.2V429.8M889.0 415.0V429.7M890.0 414.8V429.8M891.0 414.6V429.9M892.0 414.9V429.8M896.0 415.2V430.0M897.0 414.3V429.8M899.0 414.6V429.1M900.0 414.3V429.1M902.0 414.7V429.5M904.0 415.2V429.5M905.0 414.3V429.3M906.0 415.1V429.7M912.0 414.9V429.8" stroke="#e6dc1c" stroke-width="1.05" fill="none"/>
<defs><linearGradient id="core" x1="0" y1="0" x2="0" y2="1"><stop offset="0" stop-color="#e6dc18"/><stop offset="0.3" stop-color="#f4ea1c"/><stop offset="0.6" stop-color="#f8ee20"/><stop offset="1" stop-color="#e6dc18"/></linearGradient></defs>
<rect x="3.5" y="415" width="910.7" height="14" fill="url(#core)"/>
<path d="M461.3 47.6V519.6" stroke="#dcdcd0" stroke-width="1.1"/>
<path d="M760.6 28.5V519.6" stroke="#dcdcd0" stroke-width="1.1"/>
<path d="M461.8 139.2H527M695 139.2H760" stroke="#54161a" stroke-width="1" stroke-dasharray="9 2"/>
<g stroke="#c4c4c4" stroke-width="0.8" fill="none"><path d="M456.90000000000003 113.6l2.2 2.2M465.7 113.6l-2.2 2.2M456.90000000000003 122.4l2.2 -2.2M465.7 122.4l-2.2 -2.2"/><circle cx="461.3" cy="118" r="2" fill="#000"/></g>
<g stroke="#c4c4c4" stroke-width="0.8" fill="none"><path d="M756.2 108.6l2.2 2.2M765.0 108.6l-2.2 2.2M756.2 117.4l2.2 -2.2M765.0 117.4l-2.2 -2.2"/><circle cx="760.6" cy="113" r="2" fill="#000"/></g>
<text x="100.1" y="516.5" font-size="7.2" fill="#a6a6a6" text-anchor="end">-8 ms</text>
<text x="191.5" y="516.5" font-size="7.2" fill="#a6a6a6" text-anchor="end">-6 ms</text>
<text x="282.9" y="516.5" font-size="7.2" fill="#a6a6a6" text-anchor="end">-4 ms</text>
<text x="374.3" y="516.5" font-size="7.2" fill="#a6a6a6" text-anchor="end">-2 ms</text>
<text x="465.7" y="516.5" font-size="7.2" fill="#a6a6a6" text-anchor="end">0 s</text>
<text x="557.1" y="516.5" font-size="7.2" fill="#a6a6a6" text-anchor="end">2 ms</text>
<text x="648.5" y="516.5" font-size="7.2" fill="#a6a6a6" text-anchor="end">4 ms</text>
<text x="739.9" y="516.5" font-size="7.2" fill="#a6a6a6" text-anchor="end">6 ms</text>
<text x="831.3" y="516.5" font-size="7.2" fill="#a6a6a6" text-anchor="end">8 ms</text>
<text x="910.1" y="81.4" font-size="7" fill="#d8d6a4" stroke="#d8d6a4" stroke-width="0.2" text-anchor="end">3.5 V</text>
<text x="910.1" y="130.4" font-size="7" fill="#d8d6a4" stroke="#d8d6a4" stroke-width="0.2" text-anchor="end">3 V</text>
<text x="910.1" y="180.4" font-size="7" fill="#d8d6a4" stroke="#d8d6a4" stroke-width="0.2" text-anchor="end">2.5 V</text>
<text x="910.1" y="229.4" font-size="7" fill="#d8d6a4" stroke="#d8d6a4" stroke-width="0.2" text-anchor="end">2 V</text>
<text x="910.1" y="278.4" font-size="7" fill="#d8d6a4" stroke="#d8d6a4" stroke-width="0.2" text-anchor="end">1.5 V</text>
<text x="910.1" y="327.4" font-size="7" fill="#d8d6a4" stroke="#d8d6a4" stroke-width="0.2" text-anchor="end">1 V</text>
<text x="907.2" y="376.4" font-size="7" fill="#d8d6a4" stroke="#d8d6a4" stroke-width="0.2" text-anchor="end">500 mV</text>
<text x="913.3" y="425.4" font-size="7" fill="#8a8428" stroke="#8a8428" stroke-width="0.2" text-anchor="end">0 V</text>
<text x="906.4" y="474.4" font-size="7" fill="#d8d6a4" stroke="#d8d6a4" stroke-width="0.2" text-anchor="end">-500 mV</text>
<path d="M907 324L914 318V330Z" fill="#f2e51c"/>
<path d="M896.6 32.2H914.4V49.8Z" fill="#5e5e5e"/>
<g stroke="#cfcfcf" stroke-width="1.2" fill="none" stroke-linecap="round"><path d="M906 40.6L909.6 37.2"/><circle cx="911" cy="35.8" r="1.7"/></g>
<g stroke="#c8c8c8" stroke-width="0.9" fill="none"><path d="M311 19.5H308.5V25.5H311M610 19.5H612.5V25.5H610M308.5 22.5H612.5"/><path d="M560.5 19V26" stroke-dasharray="1.5 1"/></g>
<rect x="457.8" y="18.8" width="6.4" height="7.6" fill="#000" stroke="#e8962a" stroke-width="0.9"/>
<text x="461" y="25.2" font-size="6.5" font-weight="bold" fill="#f0f0f0" text-anchor="middle">T</text>
<path d="M458.5 15.8H463.5L461 18.3Z" fill="#e8962a"/>
<path d="M458.5 27H463.5L461 30Z" fill="#e8962a"/>
<rect x="449.6" y="31.2" width="14.6" height="9.7" rx="1.5" fill="#e6dc2a"/>
<text x="456.9" y="38.7" font-size="7.2" font-weight="bold" fill="#3a3600" text-anchor="middle">C1</text>
<rect x="464.2" y="31.2" width="9.4" height="9.7" rx="1.5" fill="#3a8edc"/>
<text x="469" y="38.8" font-size="7.5" fill="#e8f4ff" text-anchor="middle">A</text>
<path d="M455.6 41V44H459L461.3 47.6L463.5 44H465.8V41" stroke="#e8962a" stroke-width="0.9" fill="none"/>
<rect x="749" y="31.2" width="10.4" height="9.7" rx="1.5" fill="#3a8edc"/>
<text x="754.2" y="38.8" font-size="7.5" fill="#e8f4ff" text-anchor="middle">B</text>
<rect x="761" y="31.2" width="13.4" height="9.7" rx="1.5" fill="#e6dc2a"/>
<text x="767.7" y="38.7" font-size="7.2" font-weight="bold" fill="#3a3600" text-anchor="middle">C1</text>
<path d="M5.5 415.3H18.5L23.5 421.8L18.5 428.3H5.5Z" fill="#f3e840" stroke="#4a4400" stroke-width="0.8"/>
<text x="9.4" y="423.9" font-size="7" font-weight="bold" fill="#3a3600" letter-spacing="1.3">C1</text>
</svg>
<div class="ro" style="left:387px;width:73.5px"><span style="left:3px;top:2.2px">t: 2.059 ns</span><span style="left:3px;top:11.4px">v: 3.095 V</span></div>
<div class="ro" style="left:527px;width:168px"><span style="left:3px;top:2.2px">Δt: 6.554 ms</span><span style="left:3px;top:11.4px">Δv: 49.498 mV</span><span style="left:70px;top:2.2px">1/Δt:&nbsp; 152.59 Hz</span><span style="left:70px;top:11.4px">Δv/Δt:&nbsp; 7.55 V/s</span></div>
<div class="ro" style="left:760px;width:74px"><span style="left:3px;top:2.2px">t: 6.554 ms</span><span style="left:3px;top:11.4px">v: 3.145 V</span></div>
<div class="a" style="left:3.5px;top:523.3px;width:47px;height:41.7px;background:#cecece;color:#1a1a1a"><div class="a" style="left:0;top:0;width:47px;height:10.5px;background:#f4e93a"></div><span class="t" style="left:2.3px;top:0.8px;font-size:8px;color:#3a3400">Ch 1</span><span class="t" style="left:3.5px;top:13.5px;font-size:8px">500 mV/div</span><span class="t" style="left:4.5px;top:33px;font-size:7.6px">1 GHz</span></div>
<svg class="a" style="left:7px;top:545px" width="12" height="8" viewBox="0 0 12 8"><g stroke="#333" stroke-width="0.8" fill="none"><path d="M1 6.5A3.6 3.6 0 0 1 8.2 6.5"/><path d="M2.6 6.5A2 2 0 0 1 6.6 6.5"/></g></svg>
<div class="t" style="left:42px;top:554.5px;font-size:5px;color:#222;font-weight:bold">B<span style="font-size:4px;position:relative;top:2.2px">w</span></div>
<div class="btn" style="left:360.4px;top:523px;width:20.4px;height:41.5px;font-size:11px;line-height:39px"><div class="a" style="left:1.6px;top:2.6px;width:15.2px;height:2.4px;background:#2c7862;border-radius:1px"></div>2</div>
<div class="btn" style="left:384px;top:523px;width:20.4px;height:41.5px;font-size:11px;line-height:39px"><div class="a" style="left:1.6px;top:2.6px;width:15.2px;height:2.4px;background:#853040;border-radius:1px"></div>3</div>
<div class="btn" style="left:407.6px;top:523px;width:20.4px;height:41.5px;font-size:11px;line-height:39px"><div class="a" style="left:1.6px;top:2.6px;width:15.2px;height:2.4px;background:#777742;border-radius:1px"></div>4</div>
<div class="btn" style="left:431.2px;top:523px;width:20.4px;height:41.5px;font-size:11px;line-height:39px"><div class="a" style="left:1.6px;top:2.6px;width:15.2px;height:2.4px;background:#95784a;border-radius:1px"></div>5</div>
<div class="btn" style="left:454.8px;top:523px;width:20.4px;height:41.5px;font-size:11px;line-height:39px"><div class="a" style="left:1.6px;top:2.6px;width:15.2px;height:2.4px;background:#2e2e66;border-radius:1px"></div>6</div>
<div class="btn" style="left:478.4px;top:523px;width:20.4px;height:41.5px;font-size:11px;line-height:39px"><div class="a" style="left:1.6px;top:2.6px;width:15.2px;height:2.4px;background:#854060;border-radius:1px"></div>7</div>
<div class="btn" style="left:502px;top:523px;width:20.4px;height:41.5px;font-size:11px;line-height:39px"><div class="a" style="left:1.6px;top:2.6px;width:15.2px;height:2.4px;background:#2c785e;border-radius:1px"></div>8</div>
<div class="a" style="left:357.5px;top:523px;width:1px;height:42px;background:#474747"></div>
<div class="a" style="left:528px;top:523px;width:1px;height:42px;background:#474747"></div>
<div class="a" style="left:607px;top:523px;width:1px;height:42px;background:#474747"></div>
<div class="a" style="left:664.5px;top:523px;width:1px;height:42px;background:#474747"></div>
<div class="btn" style="left:534px;top:523px;width:20.4px;height:41.5px;font-size:8.5px;line-height:8.3px;padding-top:9px;color:#dcdcdc"><div class="a" style="left:1.6px;top:2.6px;width:15.2px;height:2.4px;background:#8a7242;border-radius:1px"></div>Add<br>New<br>Math</div>
<div class="btn" style="left:557.8px;top:523px;width:20.4px;height:41.5px;font-size:8.5px;line-height:8.3px;padding-top:9px;color:#dcdcdc"><div class="a" style="left:1.6px;top:2.6px;width:15.2px;height:2.4px;background:#8a8a8a;border-radius:1px"></div>Add<br>New<br>Ref</div>
<div class="btn" style="left:581px;top:523px;width:20.4px;height:41.5px;font-size:8.5px;line-height:8.3px;padding-top:9px;color:#dcdcdc"><div class="a" style="left:1.6px;top:2.6px;width:15.2px;height:2.4px;background:#7a52a2;border-radius:1px"></div>Add<br>New<br>Bus</div>
<div class="btn" style="left:613px;top:523px;width:20.4px;height:41.5px;font-size:8.5px;line-height:42px;color:#dcdcdc">DVM</div>
<div class="btn" style="left:639.4px;top:523px;width:20.4px;height:41.5px;font-size:8.5px;line-height:42px;color:#dcdcdc">AFG</div>
<div class="a" style="left:665.5px;top:523px;width:4.2px;height:42px;background:#222"></div>
<div class="panel" style="left:669.7px;width:107.3px"><div class="h">Horizontal</div><span class="l" style="left:4.5px;top:10.5px">2 ms/div</span><span class="l" style="left:60px;top:10.5px">20 ms</span><span class="l" style="left:4.5px;top:20.5px;letter-spacing:-.4px">SR: 3.125 GS/s</span><span class="l" style="left:60px;top:20.5px">320 ps/pt</span><span class="l" style="left:4.5px;top:30.5px">RL: 62.5 Mpts</span><svg class="a" style="left:60px;top:31.5px" width="6" height="7" viewBox="0 0 6 7"><path d="M0.3 0.3H5.7V4L3 6.7L0.3 4Z" fill="#e8962a"/><path d="M1.6 1.5H4.4M3 1.5V4.6" stroke="#222" stroke-width="0.9"/></svg><span class="l" style="left:67.3px;top:30.5px">50%</span></div>
<div class="a" style="left:777px;top:523px;width:4.8px;height:42px;background:#222"></div>
<div class="panel" style="left:781.8px;width:83.8px"><div class="h">Trigger</div><div class="a" style="left:4.2px;top:13.5px;width:15px;height:7px;background:#f2e63a;border:1px solid #8a8420;border-radius:1.5px;box-sizing:border-box;font-size:5.5px;line-height:5px;text-align:center;color:#333;-webkit-text-stroke-width:0">1</div><svg class="a" style="left:24px;top:13.5px" width="8" height="7" viewBox="0 0 8 7"><path d="M0.5 6H3L5 1H7.5" stroke="#333" stroke-width="0.9" fill="none"/></svg></div>
<div class="a" style="left:865.6px;top:523px;width:5.9px;height:42px;background:#222"></div>
<div class="panel" style="left:871.5px;width:77.2px"><div class="h">Acquisition</div><span class="l" style="left:3.5px;top:10.5px">Manual,</span><span class="l" style="left:44px;top:10.5px">Analyze</span><span class="l" style="left:3.5px;top:20.5px">Peak Detect</span><span class="l" style="left:3.5px;top:30.5px">Single: 1/1</span></div>
<div class="a" style="left:955.2px;top:523.5px;width:46.6px;height:18px;background:#f81c28;border-radius:1.5px"></div><div class="t" style="left:953.5px;width:38px;top:528px;text-align:right;color:#fff;font-weight:bold;font-size:8px;transform:scaleX(.9);transform-origin:100% 50%">Stopped</div>
<svg class="a" style="left:976px;top:499px" width="18" height="20" viewBox="0 0 18 20"><g stroke="#dedede" stroke-width="1.1" fill="none"><ellipse cx="9" cy="4" rx="6.5" ry="2"/><path d="M2.5 4.3L4 16.5Q9 19 14 16.5L15.5 4.3"/><path d="M6.8 7V15.5M9 7V16M11.2 7V15.5"/></g></svg>
<svg class="a" style="left:0;top:0" width="1008" height="567" viewBox="0 0 1008 567"><defs><clipPath id="wl"><path clip-rule="evenodd" d="M700 470H931.2V567H700ZM848 478H869V499.5H848Z"/></clipPath><clipPath id="wr"><rect x="931.2" y="470" width="77" height="97"/></clipPath></defs><g font-family="Liberation Serif, serif" font-weight="bold" font-size="80"><text x="749.7" y="538.0" clip-path="url(#wl)" fill="none" stroke="rgba(120,120,140,.5)" stroke-width="3">Agitek</text><g clip-path="url(#wr)"><text transform="translate(749.7 538.0) scale(1 .93)" fill="none" stroke="rgba(120,120,140,.5)" stroke-width="3">Agitek</text></g><text x="749.7" y="538.0" clip-path="url(#wl)" fill="#0c0cb2" stroke="#0c0cb2" stroke-width="1.4">Agitek</text><g clip-path="url(#wr)"><text transform="translate(749.7 538.0) scale(1 .93)" fill="#0c0cb2" stroke="#0c0cb2" stroke-width="1.4">Agitek</text></g></g><circle cx="858" cy="490.4" r="7.6" fill="#ea0010"/></svg>
</div></body></html>
